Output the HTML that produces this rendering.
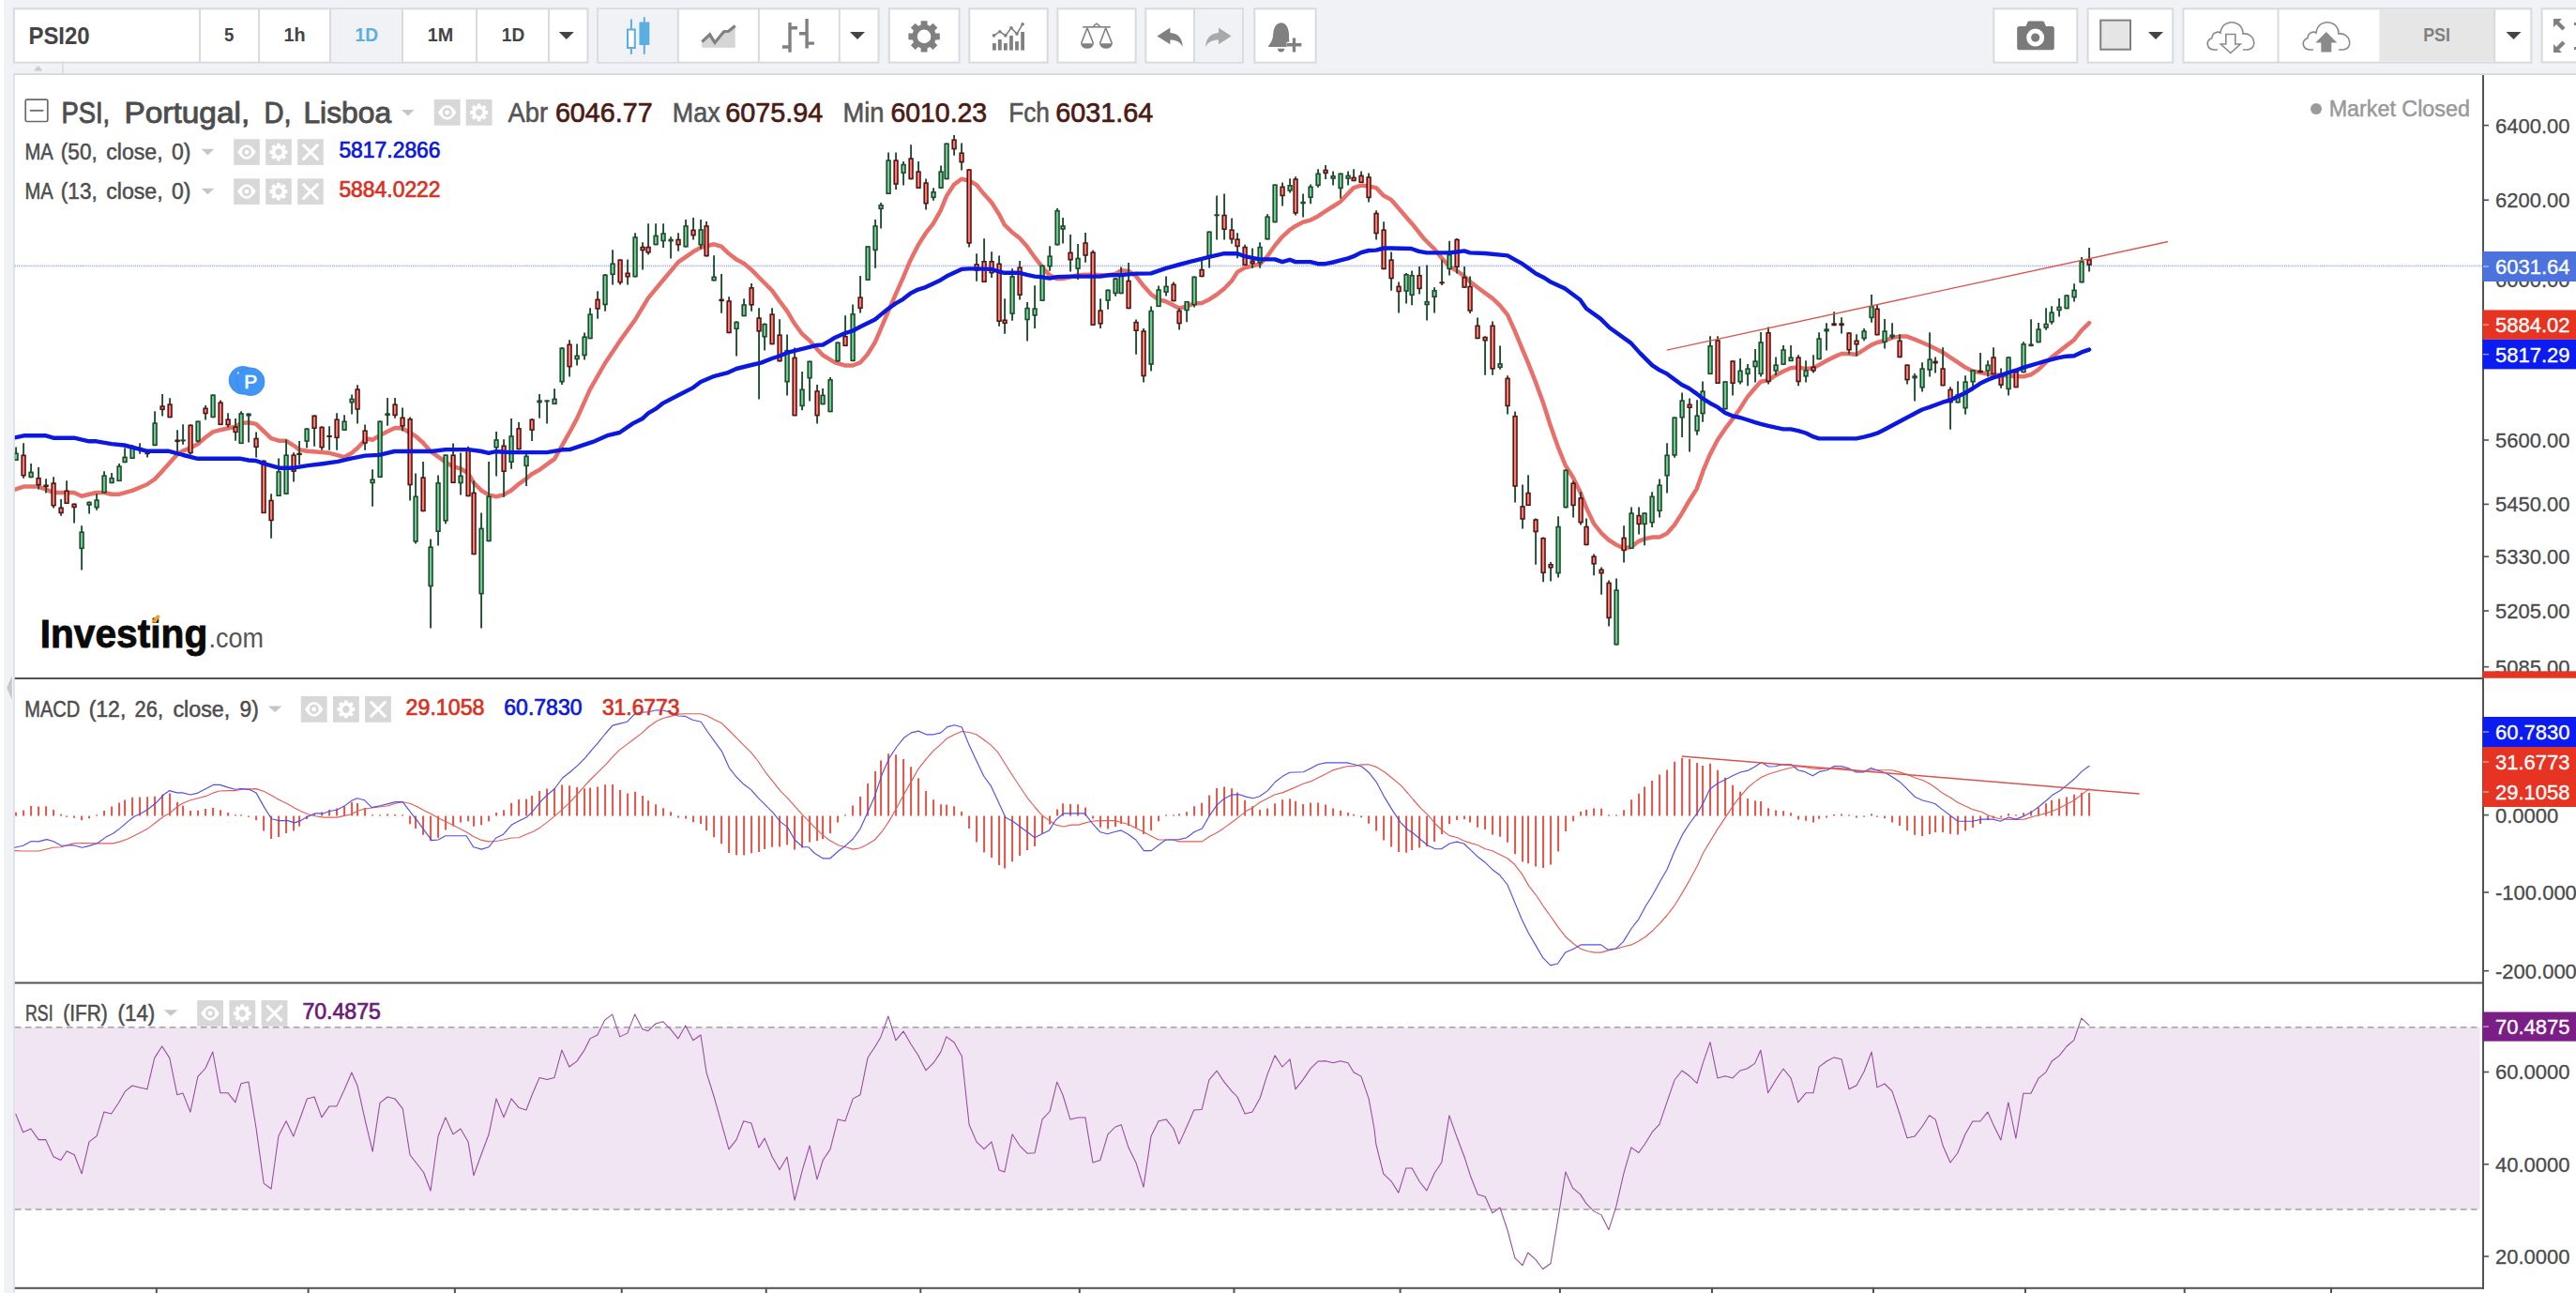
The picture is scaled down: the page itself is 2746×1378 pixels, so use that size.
<!DOCTYPE html>
<html><head><meta charset="utf-8"><title>PSI20 chart</title>
<style>html,body{margin:0;padding:0;background:#fff;}body{width:2746px;height:1378px;overflow:hidden;font-family:"Liberation Sans",sans-serif;}svg text{font-family:"Liberation Sans",sans-serif;}</style>
</head><body>
<svg width="2746" height="1378" viewBox="0 0 2746 1378" font-family="Liberation Sans, sans-serif" style="display:block"><rect x="0" y="0" width="2746" height="1378" fill="#fff"/>
<rect x="4" y="0" width="2742" height="80" fill="#f0f2f5"/>
<rect x="4" y="80" width="10.2" height="1298" fill="#f0f2f5"/>
<rect x="14.2" y="80" width="1.6" height="1298" fill="#d7dbe0"/>
<rect x="14" y="78" width="2732" height="2" fill="#d7dbe0"/>
<rect x="66" y="67" width="1.6" height="12" fill="#d7dbe0"/>
<path d="M36 75.5 L45.5 75.5 L40.8 70 Z" fill="#c9cbcf"/>
<path d="M12.8 720 L12.8 746 L7.2 733 Z" fill="#c6c8cb"/>
<rect x="14.9" y="9.3" width="611.6" height="57.3" fill="#fff" stroke="#d7dbe0" stroke-width="2"/>
<rect x="353" y="10.3" width="75" height="55.3" fill="#f0f2f5"/>
<rect x="212" y="9.3" width="2" height="57.3" fill="#d7dbe0"/>
<rect x="275" y="9.3" width="2" height="57.3" fill="#d7dbe0"/>
<rect x="351" y="9.3" width="2" height="57.3" fill="#d7dbe0"/>
<rect x="428" y="9.3" width="2" height="57.3" fill="#d7dbe0"/>
<rect x="507" y="9.3" width="2" height="57.3" fill="#d7dbe0"/>
<rect x="584" y="9.3" width="2" height="57.3" fill="#d7dbe0"/>
<text x="30.4" y="46.7" font-size="26" fill="#444" font-weight="bold" text-anchor="start" textLength="65.3" lengthAdjust="spacingAndGlyphs" >PSI20</text>
<text x="239.1" y="43.6" font-size="21" fill="#444" font-weight="bold" text-anchor="start" textLength="10.4" lengthAdjust="spacingAndGlyphs" >5</text>
<text x="302.4" y="43.6" font-size="21" fill="#444" font-weight="bold" text-anchor="start" textLength="23.1" lengthAdjust="spacingAndGlyphs" >1h</text>
<text x="378.5" y="43.6" font-size="21" fill="#5aaee0" font-weight="bold" text-anchor="start" textLength="24.5" lengthAdjust="spacingAndGlyphs" >1D</text>
<text x="455.7" y="43.6" font-size="21" fill="#444" font-weight="bold" text-anchor="start" textLength="27.5" lengthAdjust="spacingAndGlyphs" >1M</text>
<text x="534.8" y="43.6" font-size="21" fill="#444" font-weight="bold" text-anchor="start" textLength="24.4" lengthAdjust="spacingAndGlyphs" >1D</text>
<path d="M595.8 34 L611.8 34 L603.8 42 Z" fill="#444"/>
<rect x="637.2" y="9.3" width="299.3" height="57.3" fill="#fff" stroke="#d7dbe0" stroke-width="2"/>
<rect x="638.2" y="10.3" width="83.7" height="55.3" fill="#f0f2f5"/>
<rect x="721.9" y="9.3" width="2" height="57.3" fill="#d7dbe0"/>
<rect x="807.9" y="9.3" width="2" height="57.3" fill="#d7dbe0"/>
<rect x="893.8" y="9.3" width="2" height="57.3" fill="#d7dbe0"/>
<g stroke="#5aaee0" stroke-width="2" fill="none"><line x1="672.9" y1="20.5" x2="672.9" y2="57.8"/><rect x="669" y="31.5" width="7.8" height="19.5" fill="#fff"/><line x1="686.8" y1="18.2" x2="686.8" y2="57.8"/><rect x="682.5" y="24.5" width="8.8" height="22.5" fill="#5aaee0"/></g>
<path d="M748.3 44.6 L756.6 36.8 L762 45.4 L771.6 33.7 L776.7 33.3 L783.7 27.5 L783.7 50.8 L748.3 50.8 Z" fill="#d5d5d5"/>
<path d="M748.3 44.6 L756.6 36.8 L762 45.4 L771.6 33.7 L776.7 33.3 L783.7 27.5" fill="none" stroke="#808080" stroke-width="3.2"/>
<g stroke="#808080" stroke-width="3.4" fill="none"><path d="M842 23.9 V55.8 M833.9 50 H842 M842 29.8 H850"/><path d="M860.1 20 V51.6 M852 35.7 H860.1 M860.1 46.1 H867.9"/></g>
<path d="M906 34 L922 34 L914 42 Z" fill="#444"/>
<rect x="947.8" y="9.3" width="74.8" height="57.3" fill="#fff" stroke="#d7dbe0" stroke-width="2"/>
<path d="M997.4 35.4 L1001.8 35.5 L1001.8 42.3 L997.4 42.4 L996.3 45.1 L999.3 48.3 L994.5 53.1 L991.3 50.1 L988.6 51.2 L988.5 55.6 L981.7 55.6 L981.6 51.2 L978.9 50.1 L975.7 53.1 L970.9 48.3 L973.9 45.1 L972.8 42.4 L968.4 42.3 L968.4 35.5 L972.8 35.4 L973.9 32.7 L970.9 29.5 L975.7 24.7 L978.9 27.7 L981.6 26.6 L981.7 22.2 L988.5 22.2 L988.6 26.6 L991.3 27.7 L994.5 24.7 L999.3 29.5 L996.3 32.7 Z M992.4 38.9 A7.3 7.3 0 1 0 977.8 38.9 A7.3 7.3 0 1 0 992.4 38.9 Z" fill="#808080" fill-rule="evenodd"/>
<rect x="1033.3" y="9.3" width="83.4" height="57.3" fill="#fff" stroke="#d7dbe0" stroke-width="2"/>
<rect x="1058" y="46.1" width="3.8" height="7.5" fill="#808080"/>
<rect x="1063.9" y="42" width="3.8" height="11.6" fill="#808080"/>
<rect x="1070" y="46.1" width="3.8" height="7.5" fill="#808080"/>
<rect x="1076.1" y="37.9" width="3.8" height="15.7" fill="#808080"/>
<rect x="1082.1" y="44.1" width="3.8" height="9.5" fill="#808080"/>
<rect x="1088.2" y="34" width="3.8" height="19.6" fill="#808080"/>
<polyline points="1059.5,37.9 1065.8,33.7 1071.9,37.9 1078,29.8 1084,36.1 1090.1,25.7" fill="none" stroke="#808080" stroke-width="1.6"/>
<circle cx="1059.5" cy="37.9" r="1.8" fill="#808080"/>
<circle cx="1065.8" cy="33.7" r="1.8" fill="#808080"/>
<circle cx="1071.9" cy="37.9" r="1.8" fill="#808080"/>
<circle cx="1078" cy="29.8" r="1.8" fill="#808080"/>
<circle cx="1084" cy="36.1" r="1.8" fill="#808080"/>
<circle cx="1090.1" cy="25.7" r="1.8" fill="#808080"/>
<rect x="1127.4" y="9.3" width="83.2" height="57.3" fill="#fff" stroke="#d7dbe0" stroke-width="2"/>
<g stroke="#808080" stroke-width="1.6" fill="none"><path d="M1154.2 28.8 H1183.8"/><path d="M1165.5 27.8 L1169 25.2 L1172.5 27.8"/><path d="M1159 29.8 L1152.6 46.2 M1159 29.8 L1165.5 46.2"/><path d="M1178.7 29.8 L1172.5 46.2 M1178.7 29.8 L1185.4 46.2"/></g>
<path d="M1152 46.2 H1166 A7 5.6 0 0 1 1152 46.2 Z" fill="#808080"/>
<path d="M1172 46.2 H1186 A7 5.6 0 0 1 1172 46.2 Z" fill="#808080"/>
<rect x="1221.3" y="9.3" width="103.5" height="57.3" fill="#fff" stroke="#d7dbe0" stroke-width="2"/>
<rect x="1274" y="10.3" width="49.8" height="55.3" fill="#f0f2f5"/>
<rect x="1272" y="9.3" width="2" height="57.3" fill="#d7dbe0"/>
<path d="M1233.4 38.4 L1247.4 29.4 L1247.4 35 C1256 35.5 1260.5 41 1260.7 50 C1258 44.5 1254 42.5 1247.4 42.5 L1247.4 47.2 Z" fill="#808080"/>
<path d="M1312.6 38.4 L1299 29.4 L1299 35 C1290.5 35.5 1285.5 41 1285.1 50 C1288 44.5 1292 42.5 1299 42.5 L1299 47.2 Z" fill="#a9a9a9"/>
<rect x="1337.3" y="9.3" width="65.3" height="57.3" fill="#fff" stroke="#d7dbe0" stroke-width="2"/>
<path d="M1365.8 24.2 C1361.5 24.4 1358.6 28 1357.6 33 C1356.8 37.5 1357.2 41 1355.2 44.5 C1354 46.7 1352.3 48 1351.9 50 L1376.2 50 C1375.6 47.5 1374.6 46.5 1374.3 44 C1373.8 40.5 1374.4 37 1373.6 33 C1372.6 28 1370 24.4 1365.8 24.2 Z" fill="#808080"/>
<path d="M1362 51.8 H1369.2 A3.6 3.6 0 0 1 1362 51.8 Z" fill="#808080"/>
<path d="M1371.6 47.7 H1387.6 M1379.5 40.2 V55.6" stroke="#fff" stroke-width="6" fill="none"/>
<path d="M1371.8 47.7 H1387.4 M1379.5 40.4 V55.4" stroke="#808080" stroke-width="3.4" fill="none"/>
<rect x="2125.3" y="9.3" width="89" height="57.3" fill="#fff" stroke="#d7dbe0" stroke-width="2"/>
<path d="M2152.7 28.1 H2159.5 L2161.5 23.6 Q2162 22.6 2163.2 22.6 H2177.3 Q2178.5 22.6 2179 23.6 L2181 28.1 H2187.3 Q2189.8 28.1 2189.8 30.6 V50.7 Q2189.8 53.2 2187.3 53.2 H2152.7 Q2150.2 53.2 2150.2 50.7 V30.6 Q2150.2 28.1 2152.7 28.1 Z" fill="#7a7a7a"/>
<circle cx="2169.7" cy="40.1" r="9.5" fill="#fff"/><circle cx="2169.7" cy="40.1" r="4.6" fill="#7a7a7a"/>
<rect x="2225.6" y="9.3" width="90.6" height="57.3" fill="#fff" stroke="#d7dbe0" stroke-width="2"/>
<rect x="2239.2" y="21.6" width="31.8" height="31.1" fill="#e5e5e5" stroke="#808080" stroke-width="2"/>
<path d="M2290 34 L2306 34 L2298 42 Z" fill="#444"/>
<rect x="2327.4" y="9.3" width="370.9" height="57.3" fill="#fff" stroke="#d7dbe0" stroke-width="2"/>
<rect x="2427.5" y="9.3" width="2" height="57.3" fill="#d7dbe0"/>
<rect x="2536.3" y="10.3" width="123" height="55.1" fill="#e6e6e6"/>
<rect x="2658.2" y="9.3" width="2" height="57.1" fill="#d7dbe0"/>
<path d="M2364 53 H2360.5 C2353 53 2350 44 2358 40.5 C2358 35 2364 33 2367 35 C2368 26 2376 22 2383 24.5 C2389 26.5 2391 31 2391 36 C2404 34.5 2407 52 2396 53 H2391" fill="none" stroke="#8a8a8a" stroke-width="1.6"/>
<path d="M2372.8 36.5 H2382.8 V47 H2388.3 L2377.8 56.5 L2367.3 47 H2372.8 Z" fill="#fff" stroke="#8a8a8a" stroke-width="1.6"/>
<path d="M2466 53 H2462.5 C2455 53 2452 44 2460 40.5 C2460 35 2466 33 2469 35 C2470 26 2478 22 2485 24.5 C2491 26.5 2493 31 2493 36 C2506 34.5 2509 52 2498 53 H2493" fill="none" stroke="#8a8a8a" stroke-width="1.6"/>
<path d="M2479.8 34 L2491.3 45.5 H2485.3 V55.5 H2474.3 V45.5 H2468.3 Z" fill="#8a8a8a"/>
<text x="2583.2" y="44.4" font-size="21" fill="#808080" font-weight="bold" text-anchor="start" textLength="28.8" lengthAdjust="spacingAndGlyphs" >PSI</text>
<path d="M2671.5 34 L2687.5 34 L2679.5 42 Z" fill="#444"/>
<rect x="2709.6" y="9.3" width="60" height="57.1" fill="#fff" stroke="#d7dbe0" stroke-width="2"/>
<g fill="#808080"><path d="M2722 20 H2731 L2728 23 L2734.5 29.5 L2731.5 32.5 L2725 26 L2722 29 Z"/><path d="M2722 56 H2731 L2728 53 L2734.5 46.5 L2731.5 43.5 L2725 50 L2722 47 Z"/><rect x="2744" y="24" width="2" height="3"/><rect x="2744" y="50" width="2" height="3"/></g>
<rect x="15.8" y="1095" width="2627.7" height="193.8" fill="#f1e4f3"/>
<path d="M15.8 1094.8 H2643.5 M15.8 1288.8 H2643.5" stroke="#b0a9b3" stroke-width="1.8" stroke-dasharray="6.7 4.3" fill="none"/>
<path d="M15.8 283.3 H2647" stroke="#9dabea" stroke-width="1.7" stroke-dasharray="1.05 1.05" fill="none"/>
<defs><clipPath id="cm"><rect x="15.8" y="80" width="2631" height="642"/></clipPath></defs>
<g clip-path="url(#cm)">
<polyline points="16,521.6 25.3,518.6 40.6,518.6 49.1,521.6 56.8,525 78.9,525 86.9,528.8 102.7,525 111,525 118.9,526.7 127.4,526.7 141,522.8 156.3,516.5 165,510.6 173,502.1 180.9,493.2 188.9,484.2 195.4,480.3 203.1,477.4 211.1,473.1 218.9,466.3 226.9,460.4 234.9,458.2 250.9,454.8 257,451 265.1,450.3 273,451.9 281.1,459.5 289,467.2 297.1,469.7 304.9,469.7 313.1,474.8 318.9,479.1 327.1,480.8 343,482.1 350.9,482.8 358.8,484.9 366.9,487.2 375,482.8 381.1,477.5 388.9,469.3 393.1,467.7 397.1,468.7 405,464 412.8,460.1 421,456.1 429.1,456.6 437,461.2 443,464.7 450.9,471.7 459,481 467.2,486.8 475,492.6 482.9,497.2 491.1,499.5 498.9,504.2 505,514.6 513.1,522.7 521,527.4 528.9,529.2 536.8,527.4 544.9,522.7 553,515.8 561.1,510 566.9,505.3 575.1,500.7 583,494.9 591.1,489.1 599,475.1 606.9,461.2 615,446.1 628.9,415.1 645,387 661.1,362.9 677.1,340.7 691,317.6 706.9,298.5 723,279.4 738.9,268.3 746.9,263.9 753,262.3 761,260.3 768.9,262.7 776.9,270.3 784.9,276.4 793,280.8 801,287.4 808.9,295.5 814.9,301.5 823,309.6 830.8,320.6 839.1,331.7 846.9,344.8 854.9,355.8 863,362.9 870.8,371.9 877.1,378.5 885.1,383.4 890.2,386.4 900.9,389.5 909.1,389.5 917,386.4 924.9,377.5 932.8,364.8 938.9,350.7 946.9,331.6 954.8,313.7 962.7,295.9 970.8,276.7 978.7,261.4 986.7,248.7 994.8,238.4 1002.7,224.4 1008.9,209.1 1016.8,196.9 1024.9,190.7 1032.8,192.5 1040.8,196.9 1048.7,206.6 1056.8,215.5 1065,228.2 1070.9,239.7 1078.8,247.4 1086.9,253.8 1094.9,262.7 1103,274.2 1110.9,284.4 1118.8,293.3 1126.7,297.1 1132.9,297.1 1140.8,295.3 1148.9,293.3 1156.9,292.8 1165,292.8 1172.9,293.3 1181.1,293.3 1189,292 1195,288.3 1203,288.9 1210.9,294.1 1218.9,304.6 1227,313.6 1234.9,319.2 1242.9,321.3 1251,325.5 1257.1,328.6 1265,326.5 1273,323.4 1281.1,323 1289,319.2 1297,314 1304.9,307.7 1313.1,299.3 1319.1,289.9 1327,285.4 1335,283.3 1342.9,281.6 1350.9,273.2 1359,261.7 1366.9,252.3 1374.9,245 1380.9,240.9 1388.9,236.7 1397,234.6 1405,230.4 1412.9,225.2 1421,220 1429,214.8 1436.9,206.4 1443,200.1 1450.9,197.6 1459.1,198.5 1467,200.1 1474.9,208.5 1482.9,212.7 1506.5,240 1518.2,254.7 1528.8,265 1537.1,275.3 1545,284.1 1552.9,288.5 1560.9,294.4 1567.1,300.3 1575,306.2 1582.9,312.1 1590.9,317.9 1598.8,325.3 1607.1,335.6 1615,353.2 1622.9,372.4 1629.1,387.1 1637.1,407.6 1645.1,429.5 1653,454.3 1660.9,476.5 1668.9,496.3 1676.8,508.7 1684.7,524.8 1690.9,540.9 1699.1,558.2 1707,568.1 1714.9,575.5 1722.8,580.5 1730.7,584.2 1738.9,583 1746.8,576.8 1753,574.3 1761.2,572.6 1769.1,572.6 1777,568.6 1785,559.5 1792.9,547.1 1800.8,533.5 1808.7,521.1 1814.9,503.8 1816.2,499.9 1823,484.1 1831,468.8 1839,456.9 1846.9,446.7 1854.8,435.6 1862.9,422.9 1870.9,413.5 1876.9,406.7 1884.9,405.4 1892.9,399.9 1901,395.7 1908.9,392.3 1917,391.4 1925,393.1 1933,392.3 1939,388.9 1947,384.6 1955,380.4 1963,377 1970.9,377 1978.9,377.8 1987.1,372.7 1994.9,367.6 2001.1,365 2009,363.3 2016.9,359.9 2024.9,358.6 2032.9,358.6 2040.9,361.6 2049,365 2057,368.5 2062.9,371.5 2070.9,375.4 2079,380.8 2087,386.2 2095,391.6 2102.9,395.5 2111,397 2119,398.5 2125,399.3 2132.9,400.1 2141,400.6 2149,401.2 2157.1,401.2 2164.9,399.3 2173,393.9 2180.9,386.2 2186.9,380.8 2194.9,374.6 2203,368.4 2211,362.2 2218.9,352.2 2227.1,344.1" fill="none" stroke="#e8706a" stroke-width="4.5" stroke-linejoin="round" stroke-linecap="round" />
<path d="M17.1 476.5V491M25.1 472.3V509.7M33.1 494.1V509.2M41.1 498.1V521.6M49.1 510.2V525.5M57.1 508.2V541.5M65.1 532V549.7M71.1 512.3V536.9M79.1 536.6V557.5M87.1 560.2V607.5M95.1 534.4V547.6M103.1 526.2V543.7M111.1 502.2V525.5M119.1 504.1V515.2M127.1 494.1V513.1M133.1 477.4V493.2M141.1 474.3V489M149.1 472.3V483.7M157.1 479.9V487.6M165.1 438.3V475.2M173.1 420.1V443.5M181.1 424.2V445.2M189.1 458.2V481.6M195.1 452.2V473.7M203.1 452.2V484.5M211.1 448.5V471.4M219.1 432V447.6M227.1 420.4V445.2M235.1 426.4V453.1M243.1 440.3V455.5M251.1 446.1V469.7M257.1 438.3V473.1M265.1 440.5V471.4M273.1 460.4V487.6M281.1 490.2V547.1M289.1 526.2V573.8M297.1 488.5V528.9M305.1 468.4V526.9M313.1 482.3V513.6M319.1 470.1V495.3M327.1 456.1V477.4M335.1 442.5V475.7M343.1 454.3V479.8M351.1 454.3V479.8M359.1 440.3V479.8M367.1 442.2V458.9M375.1 420.6V441.5M381.1 410.2V451.5M389.1 452.4V479.8M397.1 500.2V539.7M405.1 448.5V509M413.1 424.1V453.8M421.1 424.1V445.7M429.1 434.5V459.6M437.1 444.5V533.6M443.1 504.6V579.6M451.1 492.1V545.2M459.1 574.5V669.6M467.1 506.5V581.4M475.1 484.4V558.2M483.1 472.4V515.1M491.1 482.6V527.6M499.1 475.8V529.2M505.1 512.3V591.2M513.1 546.4V669.6M521.1 492.1V577.3M529.1 460.1V507.6M537.1 468.2V529.7M545.1 446.1V499.7M553.1 450.1V479.3M561.1 480.3V518.1M567.1 446.1V470M575.1 420.1V445.7M583.1 426.4V451.5M591.1 414.3V431.1M599.1 369.9V410.1M607.1 362.3V401.5M615.1 366.5V389.6M623.1 354.4V383.4M629.1 328.3V361.2M637.1 310.2V339.7M645.1 292.1V331.7M653.1 266.3V303.5M661.1 276.4V303.5M669.1 276.4V303.5M677.1 248.2V295.5M685.1 258.3V287.4M691.1 238.2V271.5M699.1 238.2V261.3M707.1 238.2V263.9M715.1 252.2V275.6M723.1 248.2V267.7M731.1 234.1V263.5M739.1 232.1V255.5M747.1 234.1V265.5M753.1 236.1V273.4M761.1 272.3V299.5M769.1 292.1V333.7M777.1 316.2V355.2M785.1 342.3V379.5M793.1 318.2V337.3M801.1 302.1V331.7M809.1 328.3V425.6M815.1 344.4V373.5M823.1 328.3V367.3M831.1 340.3V385.4M839.1 356.4V421.6M847.1 370.5V443.3M855.1 396V437.3M863.1 384.6V427.6M871.1 410.1V451.4M877.1 414.1V431.2M885.1 402.1V439.3M893.1 364.5V385.4M901.1 336.2V369.1M909.1 324.4V385.2M917.1 294.1V333.6M925.1 262.2V298.9M933.1 234.1V285.7M939.1 216V243.5M947.1 162.4V207.1M955.1 162.4V202M963.1 172.1V197.6M971.1 154.2V191.2M979.1 172.1V200.9M987.1 190.5V223.6M995.1 200.2V213.7M1003.1 176.4V200.9M1009.1 152.5V191.2M1017.1 144V165.7M1025.1 152.5V181.5M1033.1 180.3V263.5M1041.1 270.3V299.7M1049.1 254.3V301M1057.1 268.3V295.9M1065.1 272.4V347.7M1071.1 318.3V355.8M1079.1 286.2V341.8M1087.1 278V319.6M1095.1 322.1V363.5M1103.1 304.3V350M1111.1 282.6V320.9M1119.1 262.2V288.7M1127.1 221.9V261.4M1133.1 232.1V259.6M1141.1 249.9V289.5M1149.1 260.1V297.9M1157.1 248.1V279.8M1165.1 266.5V346.9M1173.1 318.3V350M1181.1 308.6V329.8M1189.1 295.9V315.8M1195.1 284.4V313.2M1203.1 279.9V329.2M1211.1 340.5V377.7M1219.1 350.1V407.5M1227.1 326.5V395.4M1235.1 304.6V327.1M1243.1 294.5V315.6M1251.1 300.4V321.3M1257.1 328.6V351.6M1265.1 320.9V343.2M1273.1 294.5V327.5M1281.1 274.9V295.2M1289.1 246.5V285.4M1297.1 208.5V255.5M1305.1 206.4V255.5M1313.1 232.5V259.7M1319.1 248.2V275.3M1327.1 260.7V283.1M1335.1 264.5V285.8M1343.1 258.2V285.8M1351.1 228.3V255.5M1359.1 196.4V237.3M1367.1 194.5V219.6M1375.1 190.3V205.4M1381.1 188.2V229.4M1389.1 206.4V231.5M1397.1 196.4V217.3M1405.1 180.3V199.7M1413.1 176.1V191.1M1421.1 182.4V197.4M1429.1 184.5V211.6M1437.1 182.4V197.4M1443.1 180.3V193.2M1451.1 182.4V194.9M1459.1 184.5V215.4M1467.1 224.2V255.5M1475.1 236.3V287.2M1483.1 268.6V309.8M1491.1 300.4V333.4M1499.1 291V323.4M1505.1 288.5V325.3M1513.1 284.1V313.5M1521.1 282.6V341.5M1529.1 306.2V333.5M1537.1 276.8V304.1M1545.1 256.8V293.5M1553.1 254.1V291.5M1561.1 284.1V306.8M1567.1 294.4V334.1M1575.1 338.5V361.2M1583.1 358.2V399.7M1591.1 342.4V399.7M1599.1 368.5V393.8M1607.1 400.3V441.5M1615.1 438.5V535.6M1623.1 516.5V563.5M1629.1 506.2V539.1M1637.1 552.4V601.8M1645.1 572.4V620.3M1653.1 599.1V619.6M1661.1 550.3V615.6M1669.1 500.5V541.4M1677.1 512.4V551.5M1685.1 524.3V559.5M1691.1 552.5V581.2M1699.1 590.4V613.2M1707.1 604.5V633.7M1715.1 618.4V667.6M1723.1 616.4V687.4M1731.1 560.2V599.6M1739.1 540.4V585M1747.1 540.4V569.4M1753.1 546.3V581.2M1761.1 524.3V561.9M1769.1 510.4V551.5M1777.1 472.3V525.5M1785.1 444.4V487.7M1793.1 418.4V465.9M1801.1 424.6V481.5M1809.1 426.3V463.7M1815.1 406.5V449.8M1823.1 358.2V399.1M1831.1 358.2V408.9M1839.1 406.2V436.5M1847.1 384.3V421.5M1855.1 382.1V409.6M1863.1 388V411.3M1871.1 371.9V407.6M1877.1 354V401.6M1885.1 348.4V409.6M1893.1 380.4V399.9M1901.1 368.1V388.9M1909.1 368.1V385.1M1917.1 378.3V411.3M1925.1 384.3V407.6M1933.1 378.3V397.4M1939.1 354.3V383.2M1947.1 344.3V373.6M1955.1 332.2V347.2M1963.1 338.2V355.4M1971.1 354.3V377.5M1979.1 356.2V379.5M1987.1 350.1V363.3M1995.1 314V343.8M2001.1 324.2V357.4M2009.1 340V371.5M2017.1 344.3V361.6M2025.1 356.2V381.2M2033.1 388.4V409.6M2041.1 397.9V427.6M2049.1 386.3V417.4M2057.1 354.3V401.6M2063.1 380.4V397.4M2071.1 370.2V411.3M2079.1 412.2V457.8M2087.1 406.3V429.5M2095.1 400.2V441.7M2103.1 393.9V412.5M2111.1 376.1V397.3M2119.1 384.3V401.6M2125.1 370.3V399.3M2133.1 392.4V413.7M2141.1 380.3V421.4M2149.1 395.8V413.2M2157.1 364.2V397.3M2165.1 340.3V369.2M2173.1 344.1V365.3M2181.1 328.2V351.8M2187.1 326.2V345.7M2195.1 318.1V337.5M2203.1 314.3V329.3M2211.1 302.2V321.5M2219.1 274.1V301.4M2227.1 264V289.5" stroke="#1f4c2f" stroke-width="1.9" fill="none"/>
<g fill="#6fcb8e" stroke="#1c4a2c" stroke-width="1.6"><rect x="15.2" y="483.3" width="3.8" height="6.9"/><rect x="31.2" y="503.4" width="3.8" height="5"/><rect x="85.2" y="567.2" width="3.8" height="17.1"/><rect x="93.2" y="535.5" width="3.8" height="2.5"/><rect x="101.2" y="533.1" width="3.8" height="7.6"/><rect x="109.2" y="507.1" width="3.8" height="17.6"/><rect x="117.2" y="509.7" width="3.8" height="4.7"/><rect x="125.2" y="497.1" width="3.8" height="15.2"/><rect x="131.2" y="487.4" width="3.8" height="5"/><rect x="139.2" y="478.2" width="3.8" height="10"/><rect x="163.2" y="451.1" width="3.8" height="23.2"/><rect x="193.2" y="469.2" width="3.8" height="0.4"/><rect x="209.2" y="449.3" width="3.8" height="20.7"/><rect x="225.2" y="421.2" width="3.8" height="23.2"/><rect x="255.2" y="440.9" width="3.8" height="31.4"/><rect x="263.2" y="441.3" width="3.8" height="1.5"/><rect x="295.2" y="502.9" width="3.8" height="25.3"/><rect x="303.2" y="485.2" width="3.8" height="40.9"/><rect x="325.2" y="457.3" width="3.8" height="12.7"/><rect x="365.2" y="449.3" width="3.8" height="8.8"/><rect x="373.2" y="425.4" width="3.8" height="3.3"/><rect x="395.2" y="511.2" width="3.8" height="3.3"/><rect x="403.2" y="449.3" width="3.8" height="59"/><rect x="411.2" y="441.1" width="3.8" height="1.2"/><rect x="441.2" y="529.3" width="3.8" height="47.6"/><rect x="457.2" y="583.2" width="3.8" height="41.3"/><rect x="465.2" y="514.9" width="3.8" height="51.3"/><rect x="473.2" y="485.2" width="3.8" height="69.6"/><rect x="489.2" y="507.3" width="3.8" height="7.2"/><rect x="511.2" y="563.4" width="3.8" height="69.2"/><rect x="519.2" y="529.3" width="3.8" height="47.1"/><rect x="527.2" y="469" width="3.8" height="7.7"/><rect x="543.2" y="465" width="3.8" height="27.2"/><rect x="559.2" y="486.4" width="3.8" height="10"/><rect x="573.2" y="427.2" width="3.8" height="1.4"/><rect x="581.2" y="427.2" width="3.8" height="0.4"/><rect x="589.2" y="425.4" width="3.8" height="4.9"/><rect x="597.2" y="371.3" width="3.8" height="35.4"/><rect x="613.2" y="379.3" width="3.8" height="3.2"/><rect x="621.2" y="359.2" width="3.8" height="19.3"/><rect x="627.2" y="335.1" width="3.8" height="25.4"/><rect x="643.2" y="293.3" width="3.8" height="31.2"/><rect x="651.2" y="281.2" width="3.8" height="11.1"/><rect x="675.2" y="253" width="3.8" height="41.6"/><rect x="697.2" y="251.4" width="3.8" height="9.1"/><rect x="705.2" y="249" width="3.8" height="7.5"/><rect x="713.2" y="255.5" width="3.8" height="1.2"/><rect x="729.2" y="241" width="3.8" height="21.7"/><rect x="745.2" y="245" width="3.8" height="15.7"/><rect x="759.2" y="295.3" width="3.8" height="3.4"/><rect x="783.2" y="343.5" width="3.8" height="6.8"/><rect x="791.2" y="325" width="3.8" height="11.5"/><rect x="813.2" y="345.6" width="3.8" height="13.1"/><rect x="837.2" y="373.7" width="3.8" height="33"/><rect x="853.2" y="415.3" width="3.8" height="17.1"/><rect x="861.2" y="385.4" width="3.8" height="17.3"/><rect x="875.2" y="421.4" width="3.8" height="9.1"/><rect x="883.2" y="404.9" width="3.8" height="33.6"/><rect x="891.2" y="365.3" width="3.8" height="19.3"/><rect x="907.2" y="334.9" width="3.8" height="49.4"/><rect x="923.2" y="263" width="3.8" height="35.1"/><rect x="931.2" y="241" width="3.8" height="25.4"/><rect x="937.2" y="218.8" width="3.8" height="3.5"/><rect x="945.2" y="171.1" width="3.8" height="35.1"/><rect x="961.2" y="175.5" width="3.8" height="8.6"/><rect x="993.2" y="204.8" width="3.8" height="5.5"/><rect x="1001.2" y="183.1" width="3.8" height="17"/><rect x="1007.2" y="153.3" width="3.8" height="37.2"/><rect x="1077.2" y="294.9" width="3.8" height="39.2"/><rect x="1093.2" y="328.6" width="3.8" height="11.9"/><rect x="1101.2" y="329.1" width="3.8" height="6.8"/><rect x="1109.2" y="283.4" width="3.8" height="36.7"/><rect x="1117.2" y="273.2" width="3.8" height="10.4"/><rect x="1125.2" y="224.7" width="3.8" height="35.9"/><rect x="1131.2" y="241" width="3.8" height="3"/><rect x="1147.2" y="275.5" width="3.8" height="10.6"/><rect x="1179.2" y="309.4" width="3.8" height="10.6"/><rect x="1187.2" y="297.2" width="3.8" height="15.2"/><rect x="1193.2" y="294.1" width="3.8" height="18.3"/><rect x="1225.2" y="331.5" width="3.8" height="56.5"/><rect x="1233.2" y="309.1" width="3.8" height="17.2"/><rect x="1241.2" y="305.4" width="3.8" height="5.7"/><rect x="1263.2" y="321.7" width="3.8" height="8.8"/><rect x="1271.2" y="295.3" width="3.8" height="29.3"/><rect x="1287.2" y="247.3" width="3.8" height="25.1"/><rect x="1295.2" y="229.1" width="3.8" height="0.4"/><rect x="1341.2" y="263.6" width="3.8" height="16.2"/><rect x="1349.2" y="231.2" width="3.8" height="23.5"/><rect x="1357.2" y="197.2" width="3.8" height="39.3"/><rect x="1373.2" y="197.8" width="3.8" height="5.1"/><rect x="1387.2" y="215.6" width="3.8" height="0.9"/><rect x="1395.2" y="199.3" width="3.8" height="10.9"/><rect x="1403.2" y="185.3" width="3.8" height="12"/><rect x="1419.2" y="187.8" width="3.8" height="2.2"/><rect x="1427.2" y="185.3" width="3.8" height="15.1"/><rect x="1435.2" y="187.4" width="3.8" height="2.6"/><rect x="1497.2" y="292.8" width="3.8" height="17.2"/><rect x="1503.2" y="293.7" width="3.8" height="20.5"/><rect x="1519.2" y="321.7" width="3.8" height="2.8"/><rect x="1527.2" y="309.9" width="3.8" height="6.3"/><rect x="1543.2" y="271.7" width="3.8" height="14.6"/><rect x="1597.2" y="387.9" width="3.8" height="3.4"/><rect x="1659.2" y="561.5" width="3.8" height="49.1"/><rect x="1667.2" y="501.3" width="3.8" height="39.2"/><rect x="1721.2" y="629.1" width="3.8" height="57.6"/><rect x="1737.2" y="547.1" width="3.8" height="37"/><rect x="1751.2" y="547.1" width="3.8" height="11.3"/><rect x="1759.2" y="529.3" width="3.8" height="27.4"/><rect x="1767.2" y="517.2" width="3.8" height="27.1"/><rect x="1775.2" y="485.3" width="3.8" height="21.4"/><rect x="1783.2" y="445.2" width="3.8" height="39.7"/><rect x="1791.2" y="427.1" width="3.8" height="17.7"/><rect x="1807.2" y="443.2" width="3.8" height="15.7"/><rect x="1813.2" y="417.2" width="3.8" height="23.4"/><rect x="1821.2" y="368.9" width="3.8" height="29.4"/><rect x="1837.2" y="407" width="3.8" height="28.7"/><rect x="1853.2" y="395.3" width="3.8" height="11.5"/><rect x="1861.2" y="393.1" width="3.8" height="5.2"/><rect x="1869.2" y="385.1" width="3.8" height="5.5"/><rect x="1875.2" y="365" width="3.8" height="33.3"/><rect x="1891.2" y="389.2" width="3.8" height="5.7"/><rect x="1899.2" y="373" width="3.8" height="15.1"/><rect x="1907.2" y="381.2" width="3.8" height="3.2"/><rect x="1923.2" y="395.1" width="3.8" height="5.7"/><rect x="1937.2" y="361.1" width="3.8" height="21.4"/><rect x="1945.2" y="351.1" width="3.8" height="1.6"/><rect x="1985.2" y="353.1" width="3.8" height="7.4"/><rect x="1993.2" y="326.7" width="3.8" height="11.7"/><rect x="2007.2" y="353.1" width="3.8" height="11.2"/><rect x="2015.2" y="357.3" width="3.8" height="1.5"/><rect x="2039.2" y="401.1" width="3.8" height="1.5"/><rect x="2047.2" y="393.1" width="3.8" height="19.7"/><rect x="2055.2" y="383.2" width="3.8" height="10.8"/><rect x="2085.2" y="421" width="3.8" height="7.7"/><rect x="2093.2" y="407.1" width="3.8" height="27.6"/><rect x="2101.2" y="395" width="3.8" height="11.7"/><rect x="2117.2" y="389.3" width="3.8" height="5.7"/><rect x="2139.2" y="381.1" width="3.8" height="33.3"/><rect x="2155.2" y="366.9" width="3.8" height="29.6"/><rect x="2163.2" y="367.3" width="3.8" height="1"/><rect x="2171.2" y="351.1" width="3.8" height="13.4"/><rect x="2179.2" y="345.5" width="3.8" height="3.5"/><rect x="2185.2" y="333.2" width="3.8" height="9.7"/><rect x="2193.2" y="327.4" width="3.8" height="3"/><rect x="2201.2" y="315.1" width="3.8" height="13.4"/><rect x="2209.2" y="309.4" width="3.8" height="7.2"/><rect x="2217.2" y="279" width="3.8" height="21.6"/></g>
<g fill="#f67f72" stroke="#581414" stroke-width="1.6"><rect x="23.2" y="485.3" width="3.8" height="21.4"/><rect x="39.2" y="509.7" width="3.8" height="6.9"/><rect x="47.2" y="517.3" width="3.8" height="1"/><rect x="55.2" y="515.1" width="3.8" height="23.6"/><rect x="63.2" y="541.3" width="3.8" height="5.2"/><rect x="69.2" y="523.3" width="3.8" height="12.9"/><rect x="77.2" y="537.4" width="3.8" height="3"/><rect x="147.2" y="477.7" width="3.8" height="0.6"/><rect x="155.2" y="483" width="3.8" height="0.4"/><rect x="171.2" y="433.1" width="3.8" height="3.2"/><rect x="179.2" y="431.1" width="3.8" height="13.4"/><rect x="187.2" y="469.3" width="3.8" height="1"/><rect x="201.2" y="453.4" width="3.8" height="29.2"/><rect x="217.2" y="435.3" width="3.8" height="5.2"/><rect x="233.2" y="429.2" width="3.8" height="23.1"/><rect x="241.2" y="447.2" width="3.8" height="5.4"/><rect x="249.2" y="455.2" width="3.8" height="5.2"/><rect x="271.2" y="467.5" width="3.8" height="8.8"/><rect x="279.2" y="491.5" width="3.8" height="54.9"/><rect x="287.2" y="533.5" width="3.8" height="20.9"/><rect x="311.2" y="485.2" width="3.8" height="16.9"/><rect x="317.2" y="483.5" width="3.8" height="0.8"/><rect x="333.2" y="443.3" width="3.8" height="12.9"/><rect x="341.2" y="455.5" width="3.8" height="21.1"/><rect x="349.2" y="464.8" width="3.8" height="0.4"/><rect x="357.2" y="447.2" width="3.8" height="19.1"/><rect x="379.2" y="415.1" width="3.8" height="20.9"/><rect x="387.2" y="459.2" width="3.8" height="12.8"/><rect x="419.2" y="431.2" width="3.8" height="11.2"/><rect x="427.2" y="445.3" width="3.8" height="8.6"/><rect x="435.2" y="446.9" width="3.8" height="69.6"/><rect x="449.2" y="509.1" width="3.8" height="35.3"/><rect x="481.2" y="485.2" width="3.8" height="29"/><rect x="497.2" y="479.9" width="3.8" height="48.5"/><rect x="503.2" y="525.4" width="3.8" height="65"/><rect x="535.2" y="475.3" width="3.8" height="26.9"/><rect x="551.2" y="456.9" width="3.8" height="21.6"/><rect x="565.2" y="447.4" width="3.8" height="10.7"/><rect x="605.2" y="367.3" width="3.8" height="23.3"/><rect x="635.2" y="319.4" width="3.8" height="9.5"/><rect x="659.2" y="277.2" width="3.8" height="23.5"/><rect x="667.2" y="291.3" width="3.8" height="3.4"/><rect x="683.2" y="263.5" width="3.8" height="3"/><rect x="689.2" y="263.5" width="3.8" height="5.4"/><rect x="721.2" y="255.5" width="3.8" height="5.2"/><rect x="737.2" y="245.4" width="3.8" height="5.2"/><rect x="751.2" y="241" width="3.8" height="31.6"/><rect x="767.2" y="319.4" width="3.8" height="1"/><rect x="775.2" y="321" width="3.8" height="33.4"/><rect x="799.2" y="306.9" width="3.8" height="17.9"/><rect x="807.2" y="339.1" width="3.8" height="13.7"/><rect x="821.2" y="335.1" width="3.8" height="31.4"/><rect x="829.2" y="357.2" width="3.8" height="27.4"/><rect x="845.2" y="381.4" width="3.8" height="61.2"/><rect x="869.2" y="417" width="3.8" height="25.6"/><rect x="899.2" y="358.7" width="3.8" height="9.6"/><rect x="915.2" y="317.1" width="3.8" height="11.2"/><rect x="953.2" y="171.1" width="3.8" height="24.9"/><rect x="969.2" y="169.1" width="3.8" height="21.4"/><rect x="977.2" y="183.1" width="3.8" height="17"/><rect x="985.2" y="195.1" width="3.8" height="21.6"/><rect x="1015.2" y="149.2" width="3.8" height="9.4"/><rect x="1023.2" y="163.2" width="3.8" height="9.4"/><rect x="1031.2" y="181.1" width="3.8" height="77.8"/><rect x="1039.2" y="281.9" width="3.8" height="6.1"/><rect x="1047.2" y="278.8" width="3.8" height="21.4"/><rect x="1055.2" y="278.8" width="3.8" height="11.9"/><rect x="1063.2" y="281.3" width="3.8" height="60.9"/><rect x="1069.2" y="341.3" width="3.8" height="3"/><rect x="1085.2" y="285.2" width="3.8" height="29"/><rect x="1139.2" y="269.4" width="3.8" height="7.3"/><rect x="1155.2" y="259.1" width="3.8" height="12.9"/><rect x="1163.2" y="269.1" width="3.8" height="77"/><rect x="1171.2" y="331.1" width="3.8" height="13.7"/><rect x="1201.2" y="299.5" width="3.8" height="28.9"/><rect x="1209.2" y="343.6" width="3.8" height="8.6"/><rect x="1217.2" y="353" width="3.8" height="47.5"/><rect x="1249.2" y="303.3" width="3.8" height="17.2"/><rect x="1255.2" y="331.5" width="3.8" height="13"/><rect x="1279.2" y="287.6" width="3.8" height="6.8"/><rect x="1303.2" y="229.5" width="3.8" height="14.7"/><rect x="1311.2" y="245.2" width="3.8" height="9.5"/><rect x="1317.2" y="255.2" width="3.8" height="7.2"/><rect x="1325.2" y="263.6" width="3.8" height="18.7"/><rect x="1333.2" y="278.2" width="3.8" height="2.2"/><rect x="1365.2" y="199.3" width="3.8" height="9.1"/><rect x="1379.2" y="191.1" width="3.8" height="35.8"/><rect x="1411.2" y="181.5" width="3.8" height="2.8"/><rect x="1441.2" y="189.4" width="3.8" height="3"/><rect x="1449.2" y="187.4" width="3.8" height="6.8"/><rect x="1457.2" y="189" width="3.8" height="21.4"/><rect x="1465.2" y="227.5" width="3.8" height="21"/><rect x="1473.2" y="245.2" width="3.8" height="41.2"/><rect x="1481.2" y="277.2" width="3.8" height="19.3"/><rect x="1489.2" y="305.4" width="3.8" height="5.1"/><rect x="1511.2" y="293.7" width="3.8" height="13.7"/><rect x="1535.2" y="301.1" width="3.8" height="0.4"/><rect x="1551.2" y="255.5" width="3.8" height="28.7"/><rect x="1559.2" y="295.8" width="3.8" height="10.2"/><rect x="1565.2" y="305.5" width="3.8" height="25.5"/><rect x="1573.2" y="347.3" width="3.8" height="13.1"/><rect x="1581.2" y="359.6" width="3.8" height="3.1"/><rect x="1589.2" y="347.3" width="3.8" height="45.5"/><rect x="1605.2" y="403.4" width="3.8" height="29"/><rect x="1613.2" y="443.7" width="3.8" height="74.3"/><rect x="1621.2" y="539.9" width="3.8" height="13.1"/><rect x="1627.2" y="525.5" width="3.8" height="12.8"/><rect x="1635.2" y="554" width="3.8" height="12.5"/><rect x="1643.2" y="573.7" width="3.8" height="36.6"/><rect x="1651.2" y="601.8" width="3.8" height="2.9"/><rect x="1675.2" y="515.2" width="3.8" height="23.2"/><rect x="1683.2" y="531" width="3.8" height="25.6"/><rect x="1689.2" y="561.5" width="3.8" height="18.9"/><rect x="1697.2" y="593.2" width="3.8" height="7.6"/><rect x="1705.2" y="607.3" width="3.8" height="3.4"/><rect x="1713.2" y="621.4" width="3.8" height="37"/><rect x="1729.2" y="573.4" width="3.8" height="13"/><rect x="1745.2" y="549.6" width="3.8" height="8.8"/><rect x="1799.2" y="431.3" width="3.8" height="2.9"/><rect x="1829.2" y="363" width="3.8" height="45.2"/><rect x="1845.2" y="385.1" width="3.8" height="23.1"/><rect x="1883.2" y="354.8" width="3.8" height="51.6"/><rect x="1915.2" y="381.2" width="3.8" height="25.3"/><rect x="1931.2" y="391.4" width="3.8" height="3.5"/><rect x="1953.2" y="345.1" width="3.8" height="1.3"/><rect x="1961.2" y="345.1" width="3.8" height="1.3"/><rect x="1969.2" y="355.1" width="3.8" height="17.6"/><rect x="1977.2" y="363.3" width="3.8" height="3.5"/><rect x="1999.2" y="329.3" width="3.8" height="27.3"/><rect x="2023.2" y="363.3" width="3.8" height="17.1"/><rect x="2031.2" y="389.2" width="3.8" height="15.4"/><rect x="2061.2" y="385.4" width="3.8" height="1.3"/><rect x="2069.2" y="393.1" width="3.8" height="17.5"/><rect x="2077.2" y="415.4" width="3.8" height="13.2"/><rect x="2109.2" y="395.5" width="3.8" height="1"/><rect x="2123.2" y="381.1" width="3.8" height="17.4"/><rect x="2131.2" y="398.6" width="3.8" height="11.5"/><rect x="2147.2" y="396.6" width="3.8" height="15.9"/><rect x="2225.2" y="276.9" width="3.8" height="5.2"/></g>
<path d="M1777 373.1 L2311 257.5" stroke="#d9544d" stroke-width="1.4" fill="none"/>
<polyline points="16,466.3 25.3,464.3 49.1,464.3 56.8,466.7 78.9,466.7 95,470.3 102.7,470.3 118.9,473.1 132.5,474.5 157.1,480.8 180.1,480.8 195.4,485 210.7,488.8 256.6,488.8 265.1,490.5 272.8,491 282.2,494.4 297.5,498.7 312.8,498.7 328.1,496.1 343.9,494.2 360.2,491.9 374.1,488.6 389.2,485.6 404.3,484.9 420.5,481 436.8,481 460,481 475,479.1 499.4,479.1 513.3,481 521,482.8 528.9,481.2 544.9,482.1 562.1,482.1 583,482.1 599.2,479.3 607.3,479.1 634.3,470.1 648.4,463.8 660.5,461 674.5,451.4 684.6,446.3 691,440.3 699.1,435.7 706.9,429.6 723,421.2 738.9,413.1 746.9,407.1 761,401.1 775.1,397.4 784.9,393 801,389 811.3,386.6 823,382 830.8,379.5 839.1,375.9 846.9,373.9 863,369.9 870.8,367.9 877.1,367.5 885.1,362.9 890.2,359.7 900.9,355.1 909.1,352.5 917,348.2 932.8,340.5 938.9,335.4 946.9,329 954.8,323.4 962.7,318.8 970.8,312.4 978.7,308.6 986.7,306.1 994.8,302.2 1002.7,298.4 1008.9,294.6 1016.8,290.8 1024.9,286.9 1032.8,286.4 1040.8,286.4 1056.8,286.9 1065,289.5 1070.9,290.8 1086.9,290.8 1094.9,292.8 1103,294.6 1110.9,295.3 1118.8,296.6 1126.7,295.1 1140.8,294.6 1156.9,294.6 1172.9,294.6 1181.1,293.3 1195,293.1 1210.9,291.6 1227,291.4 1242.9,285.8 1257.1,282 1273,277.8 1289,273.9 1304.9,270.1 1319.1,270.3 1327,273.2 1335,274.9 1342.9,276.4 1359,276.4 1366.9,279.1 1374.9,276.8 1380.9,279.1 1397,279.1 1405,281.2 1412.9,281.2 1421,279.5 1429,277.4 1436.9,275.3 1443,273.2 1450.9,269.1 1459.1,267 1467,266.6 1474.9,264.5 1482.9,264.5 1504.4,265 1512.6,267.9 1520.9,269.4 1545,269.4 1552.9,268.5 1560.9,267.4 1567.1,269.4 1582.9,270 1607.1,272.4 1615,276.8 1622.9,281.2 1629.1,285.6 1637.1,291.5 1646.5,296.2 1653,300.6 1668.2,307.6 1684.4,319.5 1690.9,328.7 1706.1,339.6 1715.8,349.3 1738.6,365.6 1748.3,376.4 1761.3,389.4 1767.8,393.7 1776.5,398.1 1792.7,410 1800.3,413.8 1808.7,419.6 1814.9,424.6 1823,429.7 1831,433.9 1839,439.9 1846.9,443.3 1854.8,445 1862.9,447.5 1870.9,450.1 1876.9,451.8 1884.9,453.8 1892.9,455.7 1901,457.4 1908.9,457.4 1917,459.1 1925,461.5 1933,465.4 1939,467.4 1947,467.4 1963,467.4 1978.9,467.4 1987.1,465.7 1994.9,463.7 2001.1,461.7 2009,457.8 2016.9,453.5 2024.9,449.2 2032.9,445 2040.9,440.7 2049,436.5 2057,433.9 2070.9,428.7 2079,426.4 2087,422.5 2095,418.7 2102.9,414 2111,408.6 2119,404.7 2125,402.4 2132.9,400.1 2141,397 2149,394.7 2157.1,391.6 2164.9,389.3 2173,387 2180.9,384.6 2186.9,383.1 2194.9,381.2 2203,379.7 2211,379.2 2218.9,375.4 2227.1,372.6" fill="none" stroke="#0b18e0" stroke-width="4.4" stroke-linejoin="round" stroke-linecap="round" />
</g>
<circle cx="259" cy="405.3" r="14.9" fill="#4196f5" stroke="#3a88e0" stroke-width="0.8"/>
<path d="M253 396.5 L255.2 396.8 L254 400 Z" fill="#fff"/>
<circle cx="267.1" cy="406.8" r="14.9" fill="#4196f5" stroke="#3a88e0" stroke-width="0.8"/>
<text x="267.2" y="414.1" font-size="21" fill="#fff" font-weight="normal" text-anchor="middle"  stroke="#fff" stroke-width="0.7">P</text>
<path d="M17.1 869.5V865.8M25.1 869.5V863.4M33.1 869.5V859.1M41.1 869.5V859.4M49.1 869.5V859.2M57.1 869.5V863M65.1 869.5V867.8M71.1 869.5V870.7M79.1 869.5V871.8M87.1 869.5V874.2M95.1 869.5V872.3M103.1 869.5V868.3M111.1 869.5V864M119.1 869.5V859.6M127.1 869.5V855.6M133.1 869.5V852.6M141.1 869.5V849.7M149.1 869.5V849.4M157.1 869.5V849.2M165.1 869.5V848.8M173.1 869.5V846.8M181.1 869.5V845.6M189.1 869.5V854.7M195.1 869.5V858.7M203.1 869.5V863.9M211.1 869.5V863.8M219.1 869.5V861.9M227.1 869.5V861M235.1 869.5V863.2M243.1 869.5V866.1M251.1 869.5V868.2M257.1 869.5V868.3M265.1 869.5V870.7M273.1 869.5V873.9M281.1 869.5V885.5M289.1 869.5V893.9M297.1 869.5V891.9M305.1 869.5V887.9M313.1 869.5V885.6M319.1 869.5V880.8M327.1 869.5V873.1M335.1 869.5V867.3M343.1 869.5V865.5M351.1 869.5V863.1M359.1 869.5V861.4M367.1 869.5V859.2M375.1 869.5V855M381.1 869.5V855.9M389.1 869.5V860.9M397.1 869.5V868.3M405.1 869.5V868.3M413.1 869.5V867.4M421.1 869.5V867.9M429.1 869.5V868.3M437.1 869.5V878.3M443.1 869.5V883.1M451.1 869.5V889.7M459.1 869.5V896.3M467.1 869.5V892.8M475.1 869.5V884.5M483.1 869.5V880.6M491.1 869.5V876.5M499.1 869.5V875.3M505.1 869.5V880.7M513.1 869.5V879.2M521.1 869.5V875.3M529.1 869.5V865.9M537.1 869.5V863.2M545.1 869.5V855.7M553.1 869.5V851.9M561.1 869.5V851.5M567.1 869.5V848.1M575.1 869.5V843.1M583.1 869.5V840.6M591.1 869.5V840.3M599.1 869.5V836.4M607.1 869.5V837.3M615.1 869.5V839.1M623.1 869.5V840.3M629.1 869.5V839.4M637.1 869.5V838.5M645.1 869.5V836.2M653.1 869.5V836M661.1 869.5V841.9M669.1 869.5V845.5M677.1 869.5V843.7M685.1 869.5V848.1M691.1 869.5V853.3M699.1 869.5V857.2M707.1 869.5V861.2M715.1 869.5V865.2M723.1 869.5V871.5M731.1 869.5V872.4M739.1 869.5V876.2M747.1 869.5V878M753.1 869.5V885M761.1 869.5V892.2M769.1 869.5V899.2M777.1 869.5V909.1M785.1 869.5V911.2M793.1 869.5V911.2M801.1 869.5V909.2M809.1 869.5V907.9M815.1 869.5V904.9M823.1 869.5V902.7M831.1 869.5V902.5M839.1 869.5V900.6M847.1 869.5V905.4M855.1 869.5V903.6M863.1 869.5V897.6M871.1 869.5V896.3M877.1 869.5V894.2M885.1 869.5V888.2M893.1 869.5V876.6M901.1 869.5V868.3M909.1 869.5V858.6M917.1 869.5V849M925.1 869.5V835M933.1 869.5V821.9M939.1 869.5V810.6M947.1 869.5V803.3M955.1 869.5V804.3M963.1 869.5V809M971.1 869.5V817.2M979.1 869.5V829.3M987.1 869.5V843M995.1 869.5V852.3M1003.1 869.5V857.3M1009.1 869.5V857.4M1017.1 869.5V859.3M1025.1 869.5V864.9M1033.1 869.5V883.1M1041.1 869.5V897.6M1049.1 869.5V908.6M1057.1 869.5V914M1065.1 869.5V922.1M1071.1 869.5V925.5M1079.1 869.5V918.2M1087.1 869.5V912.1M1095.1 869.5V906.1M1103.1 869.5V901.9M1111.1 869.5V889M1119.1 869.5V878.4M1127.1 869.5V862.6M1133.1 869.5V856.3M1141.1 869.5V857.1M1149.1 869.5V857.3M1157.1 869.5V860.4M1165.1 869.5V872.6M1173.1 869.5V881.8M1181.1 869.5V883.5M1189.1 869.5V881.3M1195.1 869.5V877.9M1203.1 869.5V880.2M1211.1 869.5V882.5M1219.1 869.5V889M1227.1 869.5V885.1M1235.1 869.5V875.2M1243.1 869.5V868.3M1251.1 869.5V868.3M1257.1 869.5V867.2M1265.1 869.5V865.2M1273.1 869.5V859.3M1281.1 869.5V855.7M1289.1 869.5V847.6M1297.1 869.5V840M1305.1 869.5V838.5M1313.1 869.5V840.3M1319.1 869.5V844.5M1327.1 869.5V852.7M1335.1 869.5V859.2M1343.1 869.5V863M1351.1 869.5V861.4M1359.1 869.5V856.2M1367.1 869.5V852.2M1375.1 869.5V851.2M1381.1 869.5V853.7M1389.1 869.5V857M1397.1 869.5V855.5M1405.1 869.5V855.4M1413.1 869.5V857.5M1421.1 869.5V861.6M1429.1 869.5V863.8M1437.1 869.5V866M1443.1 869.5V867.8M1451.1 869.5V871.3M1459.1 869.5V877.8M1467.1 869.5V885.5M1475.1 869.5V895.5M1483.1 869.5V902.4M1491.1 869.5V908.1M1499.1 869.5V908.7M1505.1 869.5V906M1513.1 869.5V903.5M1521.1 869.5V902M1529.1 869.5V896.9M1537.1 869.5V889M1545.1 869.5V878.2M1553.1 869.5V874M1561.1 869.5V872.9M1567.1 869.5V876.5M1575.1 869.5V881.7M1583.1 869.5V884M1591.1 869.5V889.5M1599.1 869.5V891.7M1607.1 869.5V897.8M1615.1 869.5V910.2M1623.1 869.5V918.5M1629.1 869.5V920.2M1637.1 869.5V923.5M1645.1 869.5V925.1M1653.1 869.5V921.6M1661.1 869.5V907.4M1669.1 869.5V885.9M1677.1 869.5V875.3M1685.1 869.5V865.1M1691.1 869.5V863.1M1699.1 869.5V861.4M1707.1 869.5V861.8M1715.1 869.5V868.3M1723.1 869.5V868.3M1731.1 869.5V863.2M1739.1 869.5V852.2M1747.1 869.5V845.8M1753.1 869.5V838.4M1761.1 869.5V832.1M1769.1 869.5V825.4M1777.1 869.5V820.6M1785.1 869.5V811.8M1793.1 869.5V807.8M1801.1 869.5V809M1809.1 869.5V813M1815.1 869.5V816M1823.1 869.5V813.8M1831.1 869.5V820.8M1839.1 869.5V828.8M1847.1 869.5V836.8M1855.1 869.5V843.8M1863.1 869.5V851.1M1871.1 869.5V853.3M1877.1 869.5V853.9M1885.1 869.5V861.3M1893.1 869.5V863.5M1901.1 869.5V864.2M1909.1 869.5V866.2M1917.1 869.5V873.4M1925.1 869.5V874.8M1933.1 869.5V876.6M1939.1 869.5V872.7M1947.1 869.5V871.4M1955.1 869.5V867.9M1963.1 869.5V867.4M1971.1 869.5V868.3M1979.1 869.5V871.4M1987.1 869.5V870.7M1995.1 869.5V867.3M2001.1 869.5V870.7M2009.1 869.5V872.3M2017.1 869.5V876.6M2025.1 869.5V879.9M2033.1 869.5V885.2M2041.1 869.5V889.7M2049.1 869.5V890.9M2057.1 869.5V889M2063.1 869.5V887M2071.1 869.5V887.1M2079.1 869.5V888.7M2087.1 869.5V889.4M2095.1 869.5V885.5M2103.1 869.5V881.9M2111.1 869.5V878M2119.1 869.5V873.9M2125.1 869.5V872M2133.1 869.5V871.6M2141.1 869.5V867.1M2149.1 869.5V868.3M2157.1 869.5V866.2M2165.1 869.5V864.2M2173.1 869.5V860.6M2181.1 869.5V856.2M2187.1 869.5V852.7M2195.1 869.5V851.3M2203.1 869.5V849.4M2211.1 869.5V846.8M2219.1 869.5V845M2227.1 869.5V845" stroke="#de5448" stroke-width="2" fill="none"/>
<polyline points="15.8,906.6 24.6,907 41.1,907 56.6,903.3 65.3,902.7 77.9,898.9 87.6,898.5 104.1,898.9 120.6,898.9 128.4,896.9 136.2,894 143,890.7 150.7,886.8 158.5,882.4 166.2,876.5 175,869.8 180.8,866.8 188.6,860 194.4,856.2 203.1,852.7 210.9,850.7 219.6,848.4 227.4,844.9 234.2,843 242.9,842.6 250.7,842.6 258.4,841 273,840.6 281.7,843.5 289.5,847.8 297.3,852.3 307,857.1 313.8,861 320.6,864.5 328.3,867.8 336.1,869.8 344.8,871.1 359.4,871.1 367.1,869.4 374.9,867.8 380.7,864.5 388.5,862 396.3,861 406,859.7 413.7,858.7 421.5,856.2 429.3,854.8 437,856.2 444.8,859.7 452.5,863.9 460.3,867.8 467.1,871.7 474.9,875.6 483.6,879.8 497.2,886.8 504.6,891.5 513.3,895.4 521.1,896.9 528.8,896.5 536.6,895 545.3,893 553.1,892.7 560.8,889.2 568.6,886.2 576.4,881.4 584.1,875.6 590.9,870.1 599.7,862.4 608.4,854.2 616.2,845.5 623.9,836.8 629.8,830.5 637.5,822.8 645.3,815.4 653,806.7 660.8,798.9 668.6,793.1 676.3,787.3 684.1,781.4 691.9,774.3 699.6,768.8 707.4,765.3 715.2,763.4 722.9,761.1 730.7,760.7 747.2,760.7 754,763 761.7,766.9 769.5,770.8 777.3,778.5 785,786.3 792.8,794.1 800.6,801.8 808.3,811.5 816.1,823.2 823.9,832.9 831.6,842.6 839.4,850.3 847.1,859.1 855.9,868.8 861.7,874.6 868.5,881.8 877.2,890.1 885,896 893.7,900.8 901.5,902.7 909.3,905.1 917,903.7 924.8,899.8 932.5,895 940.3,886.2 948.1,874.6 955.8,861 963.6,846.5 971.4,832.9 979.1,819.3 987.5,808.6 995.2,799.9 1003,793.1 1009.8,786.7 1017.6,782.8 1025.3,779.5 1033.1,780.5 1040.8,782.8 1048.6,788.2 1056.4,794.1 1064.1,802.2 1071.9,814.8 1079.7,827 1087.4,838.7 1095.2,850.3 1103,860 1110.7,868.8 1118.5,874.6 1125.3,879.1 1134,881 1141.8,879.1 1149.5,879.1 1157.3,876.9 1164.1,875.2 1172.8,874.6 1189.3,874.6 1195.2,876.5 1202.9,878.5 1210.7,882.4 1219.4,886.8 1227.2,891.1 1234.9,895 1249.5,895 1257.3,896.9 1281.5,896.9 1289.3,891.5 1297.1,887.6 1304.8,882.4 1313.6,876 1321.3,870.1 1329.1,863.9 1335.9,860.4 1342.7,855.2 1351.4,850.7 1359.2,846.8 1366.9,844.9 1374.7,841.6 1389.3,835.2 1397,832.9 1404.8,829 1413.5,824.7 1421.3,820.6 1435.8,816.8 1443.6,816.4 1451.4,814.8 1459.1,814.8 1467.3,817.4 1476,822.8 1484.6,829.7 1493.3,836.9 1500.9,845.5 1506.3,852 1515,861.8 1522.5,868.9 1530.1,878 1536.6,884.5 1545.3,890.6 1552.9,892.5 1560.4,896 1568,898.6 1575.6,900.8 1583.2,904.7 1590.8,906.8 1598.3,910.5 1607,914.8 1614.6,921.3 1622.2,931.1 1629.7,944.1 1637.3,953.8 1644.9,965.3 1652.9,976.5 1660.5,987.4 1668.7,998.2 1677.4,1005.8 1685,1011.2 1692.5,1013.8 1700.1,1015.1 1706.6,1015.1 1714.2,1012.9 1722.8,1011.2 1730.4,1009 1739.1,1006.9 1746.7,1003 1754.2,998.2 1761.8,991.7 1769.4,984.1 1777,975.5 1784.6,965.7 1793.2,951.6 1800.8,938.6 1809.5,922.4 1816,908.3 1822.5,897.5 1831.1,883.4 1839.8,870.4 1848.4,857.4 1856,847.7 1863.6,839 1870.1,833.6 1877.7,828.2 1885.3,825 1899.2,820.7 1909.7,818 1916.7,816.8 1923.7,817.5 1932.4,819.3 1939.4,819.4 1948.1,818.9 1955.1,818 1963,818.6 1970.8,820 1978.7,821 1986.6,821.5 1994.4,821 2002.3,820.7 2016.3,820.7 2025,822.9 2033.7,825.6 2041.6,829 2049.5,831.5 2056.5,835 2062.6,839 2070.4,845.1 2079.2,850 2087,855.3 2094.9,859.1 2102.7,862.6 2112.4,865.2 2120.2,869.2 2128.1,871.7 2132.4,872.7 2141.2,873.4 2149,873.4 2157.8,873.1 2166.5,870.5 2175.2,868.2 2182.2,866.4 2188.4,864.3 2196.2,860.8 2203.2,857 2211.1,853 2218.9,846.9 2227.1,840.8" fill="none" stroke="#e25d55" stroke-width="1.15" stroke-linejoin="round" stroke-linecap="round" />
<polyline points="15.8,903.3 24.6,901.2 33.3,896.5 41.1,896.9 49.8,894.6 56.6,896.5 65.3,901.2 77.9,900.8 87.6,903.3 95.4,901.4 104.1,898.5 112.9,892.1 120.6,888.2 128.4,882.4 136.2,875.6 143,870.3 150.7,866.8 158.5,862 166.2,855.8 175,846.5 180.8,842.6 188.6,844.9 194.4,844.9 203.1,847 210.9,845.1 219.6,840.6 227.4,836.4 234.2,836.4 242.9,839.1 250.7,841.2 258.4,840.6 266.2,841.6 273,844.9 281.7,860.4 289.5,872.7 297.3,874.6 307,874.6 313.8,876.9 320.6,874.6 328.3,870.1 336.1,866.8 344.8,866.8 351.6,864.5 359.4,863 367.1,859.1 374.9,853.3 380.7,850.7 388.5,852.7 396.3,860.6 406,858.5 413.7,856.6 421.5,854.6 429.3,854.6 437,864.9 444.8,874.6 452.5,885.3 460.3,895.6 467.1,895 474.9,890.7 483.6,890.7 497.2,890.7 504.6,902.7 513.3,905.1 521.1,902.7 528.8,893 536.6,889.2 545.3,879.1 554.1,874.6 561.8,870.7 568.6,863.9 576.4,854.2 584.1,846.5 590.9,841 599.7,829 608.4,822.2 616.2,815.4 623.9,807.6 629.8,800.3 637.5,791.7 645.3,782 653,773.1 660.8,771.1 668.6,769.2 676.3,761.1 684.1,759.1 691.9,758.7 699.6,756.8 707.4,757.2 715.2,759.1 722.9,763 730.7,763.4 738.4,767.3 747.2,769.2 754,779.5 761.7,790.2 769.5,800.8 777.3,818.3 785,828 792.8,835.8 800.6,841.6 808.3,850.3 816.1,858.1 823.9,865.9 831.6,875.6 839.4,881.4 847.1,895 855.9,902.7 861.7,902.7 868.5,909.5 877.2,914.8 885,914.8 893.7,907 901.5,901.2 909.3,894 917,883.3 924.8,865.9 932.5,848.4 940.3,825.1 948.1,807.6 955.8,796 963.6,786.3 971.4,780.9 979.1,779.1 987.5,782.8 995.2,782.8 1003,780.9 1009.8,774.6 1017.6,772.7 1025.3,775 1033.1,794.1 1040.8,810.6 1048.6,827 1056.4,837.7 1064.1,854.2 1071.9,871.3 1079.7,875.2 1087.4,881 1095.2,886.8 1103,892.7 1110.7,888.8 1118.5,884.9 1125.3,874 1134,866.8 1141.8,866.8 1156.3,866.8 1164.1,877.1 1172.8,886.8 1180.6,888.8 1187.4,886.8 1195.2,884.9 1202.9,889.2 1210.7,895 1219.4,906.6 1227.2,906.6 1234.9,900.8 1242.7,895 1249.5,895 1257.3,894.6 1265,892.7 1272.8,886.8 1281.5,883 1289.3,869.4 1297.1,858.1 1304.8,851.3 1313.6,846.8 1321.3,846.8 1329.1,849.4 1335.9,850.7 1342.7,848.8 1351.4,842.6 1359.2,833.5 1366.9,827.6 1374.7,823.2 1389.3,822.8 1397,818.9 1404.8,814.8 1413.5,812.9 1435.8,812.9 1443.6,814.8 1451.4,816.8 1459.1,823.2 1467.3,833.6 1476,849.9 1484.6,863.9 1493.3,876.9 1500.9,884.5 1506.3,887.8 1515,895.3 1522.5,901.2 1530.1,904.7 1536.6,904.7 1545.3,899 1552.9,897.1 1560.4,899 1568,906.2 1575.6,913.3 1583.2,919.2 1590.8,926.7 1598.3,932.2 1607,943 1614.6,961.4 1622.2,979.8 1629.7,995 1637.3,1007.9 1644.9,1020.9 1652.9,1028.9 1660.5,1027 1668.7,1015.1 1677.4,1011.2 1685,1006.9 1706.6,1006.9 1714.2,1012.3 1722.8,1010.8 1730.4,1003.6 1739.1,989.5 1746.7,979.8 1754.2,965.7 1761.8,953.8 1769.4,939.7 1777,926.7 1784.6,908.3 1793.2,889.9 1800.8,878 1809.5,866.1 1816,855.3 1822.5,841.2 1831.1,834.7 1839.8,830.4 1848.4,826 1856,822.8 1863.6,821.1 1870.1,817.4 1877.7,812.6 1885.3,817 1892.2,816.8 1899.2,814.9 1909.7,814.9 1916.7,820.7 1923.7,822.4 1932.4,826.8 1939.4,822.4 1948.1,820.7 1955.1,816.5 1963,816.5 1970.8,818.9 1978.7,822.9 1986.6,822.9 1994.4,818.6 2002.3,821.2 2010.2,823.8 2018,828.5 2025,833.2 2033.7,841.6 2041.6,849.5 2049.5,853 2056.5,854.7 2062.6,856.5 2070.4,862.6 2079.2,869.2 2087,875.2 2102.7,875.2 2112.4,873.1 2124.6,873.1 2132.4,875.2 2141.2,871 2149,873.1 2157.8,869.6 2166.5,864.9 2175.2,858.2 2182.2,852.5 2188.4,846.9 2196.2,842.5 2203.2,836.9 2211.1,830.3 2218.9,822.4 2227.1,816.3" fill="none" stroke="#524fe3" stroke-width="1.15" stroke-linejoin="round" stroke-linecap="round" />
<path d="M1792.8 805.9 L2280.6 846.1" stroke="#d9544d" stroke-width="1.5" fill="none"/>
<polyline points="16.8,1187.4 24.6,1206.8 32.9,1203 41.1,1214.6 48.8,1214.6 57,1232.7 64.9,1236.5 71.1,1226.8 79.3,1230.7 87.1,1250.9 95,1216.9 103.2,1210.7 110.9,1185.1 118.7,1187 126.8,1174.8 133.3,1163.2 141,1157 148.8,1158.9 156.9,1160.8 164.7,1127.6 172.7,1115 180.8,1127.6 188.8,1166.7 195,1165.1 202.9,1185.1 210.9,1147.3 219,1138.5 226.8,1121 234.8,1164.7 242.9,1164.7 250.9,1174.8 256.9,1154.8 265,1153.1 273,1202 281.2,1261.2 289.1,1267 296.9,1210.7 305,1194.8 312.8,1211.1 320.9,1189 327.4,1170.9 335.1,1169 342.9,1190.9 351,1178.9 359,1178.9 367.1,1161.2 374.9,1143 381.1,1157.3 389.5,1195.2 397.2,1227.2 405,1175.4 413.1,1169 420.9,1170.9 429.3,1181.6 437,1230.7 444.8,1240.8 451.6,1249.5 459,1269 467.1,1210.7 474.9,1190.9 483,1208.8 491,1203 499.1,1216.9 505,1252.8 512.9,1230.7 521.1,1208.8 529,1170.9 537,1190.7 545.1,1170.9 553.1,1180.6 561,1183 567.1,1167 575,1148.6 583.2,1150.6 590.9,1148.6 598.9,1119.1 606.8,1137 614.8,1131.1 623,1119.1 629,1106.9 636.9,1103 644.7,1087.1 652.7,1081.1 660.8,1104.9 668.8,1101.1 676.7,1081.1 684.9,1096.8 690.9,1098.7 699,1091 706.8,1088.8 714.8,1096.8 722.9,1106.9 730.7,1092.9 738.8,1108.8 747,1103 753,1142.8 761.2,1169 769.1,1197.1 776.9,1224.9 785,1214.6 792.8,1194.8 800.9,1197.1 808.9,1223 815.1,1213.1 823.1,1232.7 831,1246.6 839,1233 847.1,1279.2 854.9,1248.6 863.1,1221 871,1256.9 877.2,1236.5 885,1224.9 893.1,1192.9 900.9,1194.8 909.3,1170.9 917,1166.7 925,1127.3 933.1,1115 939,1104.9 946.9,1083 954.9,1108.8 963,1099.1 971,1112.7 979.1,1125.3 986.9,1140.8 995.2,1132.7 1003,1120.9 1008.8,1104.9 1017,1110.8 1025.3,1125.7 1033.1,1198.5 1041,1216.9 1049,1224.7 1057,1216.9 1065.1,1247 1070.9,1249 1079.1,1208.8 1086.8,1220.8 1095.2,1229.2 1103,1228.8 1111.1,1192.9 1119.1,1184.5 1126.8,1153.1 1133,1167 1140.8,1192.9 1149.5,1190.9 1156.9,1190.9 1164.9,1238.9 1172.8,1236.5 1181,1208.8 1188.9,1201 1195.2,1198.7 1202.9,1222.8 1210.9,1238.9 1219,1265.1 1227,1211.1 1235.1,1194.8 1243.1,1192.9 1251.1,1203 1256.9,1219.1 1265,1201 1272.8,1183 1281.1,1182.6 1288.9,1150.9 1297.1,1141.2 1305,1153.1 1313.2,1163.2 1319,1169 1327.1,1187 1334.9,1184.9 1343.1,1170.5 1351,1145.1 1359,1124.9 1366.9,1137 1375.1,1128.8 1380.9,1160.8 1388.9,1150.9 1397,1138.9 1405,1131.1 1413.1,1130.8 1421.1,1132.7 1429,1130.8 1437,1132.7 1443,1142.8 1451,1147.1 1459.1,1170.9 1465,1203 1466.8,1219.1 1474.7,1250.9 1483,1258.8 1490.8,1271.1 1498.9,1244.9 1505.2,1244.9 1513.3,1259.5 1520.9,1268.9 1529,1250.5 1536.8,1238.8 1544.9,1188.8 1553.2,1212.3 1561.3,1233.7 1567.3,1252.7 1575.2,1272.9 1583.2,1275.2 1590.9,1292.7 1598.9,1287 1607,1311 1614.9,1340.7 1622.9,1348.7 1628.8,1335 1636.9,1342.4 1644.7,1352.5 1653,1346.5 1660.9,1298.7 1668.9,1248.9 1676.6,1266.2 1684.6,1272.9 1690.9,1282.6 1699,1290.9 1707.1,1294.9 1714.9,1310.6 1722.8,1285.9 1730.8,1250.9 1738.9,1222.9 1746.8,1228.5 1753.3,1219.5 1761.1,1206.7 1769,1198.2 1777.1,1174.2 1784.9,1151.3 1793,1141 1801.1,1146.8 1808.9,1154.5 1815.2,1133.4 1823,1110.7 1830.9,1148.9 1839,1146.8 1847,1148.9 1854.9,1141 1862.7,1138.8 1870.6,1133.4 1876.9,1119.3 1884.7,1164.8 1893,1150.9 1893,1150.7 1901,1139 1909,1148.8 1916.8,1174.9 1925,1164.8 1933,1164.8 1939.1,1137.2 1947.2,1131 1955.1,1126.9 1963.2,1129.1 1971.1,1160.7 1979.1,1156.8 1987.1,1142 1995.1,1121 2001,1158.9 2009,1155 2017,1162.8 2025,1187 2033,1212.8 2041,1211.1 2049,1200.7 2056.6,1188.8 2063.2,1193.1 2071.2,1221.2 2079,1239 2086.9,1228.8 2094.9,1208.7 2102.9,1195 2110.9,1195 2118.9,1185.1 2125.1,1199 2132.9,1215 2140.9,1174.9 2148.9,1213.2 2156.9,1165.2 2165,1165.2 2173,1149.2 2181,1142.6 2187.2,1131 2195.2,1125.1 2203.2,1115 2210.8,1108.6 2218.8,1085.1 2226.9,1092.6" fill="none" stroke="#95499f" stroke-width="1.05" stroke-linejoin="round" stroke-linecap="round" />
<rect x="15.8" y="722" width="2632.2" height="2" fill="#4f5357"/>
<rect x="15.8" y="1046.5" width="2632.2" height="2" fill="#4f5357"/>
<rect x="15.8" y="1371.8" width="2632.2" height="2" fill="#4f5357"/>
<rect x="2646" y="80" width="2" height="1293.8" fill="#4f5357"/>
<rect x="165.8" y="1373" width="2" height="6" fill="#4f5357"/>
<rect x="327.6" y="1373" width="2" height="6" fill="#4f5357"/>
<rect x="483.9" y="1373" width="2" height="6" fill="#4f5357"/>
<rect x="661.7" y="1373" width="2" height="6" fill="#4f5357"/>
<rect x="815.7" y="1373" width="2" height="6" fill="#4f5357"/>
<rect x="980.3" y="1373" width="2" height="6" fill="#4f5357"/>
<rect x="1149.8" y="1373" width="2" height="6" fill="#4f5357"/>
<rect x="1314.5" y="1373" width="2" height="6" fill="#4f5357"/>
<rect x="1491.6" y="1373" width="2" height="6" fill="#4f5357"/>
<rect x="1661.9" y="1373" width="2" height="6" fill="#4f5357"/>
<rect x="1824" y="1373" width="2" height="6" fill="#4f5357"/>
<rect x="1996" y="1373" width="2" height="6" fill="#4f5357"/>
<rect x="2158" y="1373" width="2" height="6" fill="#4f5357"/>
<rect x="2327.7" y="1373" width="2" height="6" fill="#4f5357"/>
<rect x="2484" y="1373" width="2" height="6" fill="#4f5357"/>
<rect x="2647" y="132.8" width="6" height="1.6" fill="#4f5357"/>
<text x="2660" y="141.5" font-size="22" fill="#4a4a4a" font-weight="normal" text-anchor="start"  stroke="#4a4a4a" stroke-width="0.3">6400.00</text>
<rect x="2647" y="212.4" width="6" height="1.6" fill="#4f5357"/>
<text x="2660" y="221.1" font-size="22" fill="#4a4a4a" font-weight="normal" text-anchor="start"  stroke="#4a4a4a" stroke-width="0.3">6200.00</text>
<rect x="2647" y="297.2" width="6" height="1.6" fill="#4f5357"/>
<text x="2660" y="305.9" font-size="22" fill="#4a4a4a" font-weight="normal" text-anchor="start"  stroke="#4a4a4a" stroke-width="0.3">6000.00</text>
<rect x="2647" y="468.2" width="6" height="1.6" fill="#4f5357"/>
<text x="2660" y="476.9" font-size="22" fill="#4a4a4a" font-weight="normal" text-anchor="start"  stroke="#4a4a4a" stroke-width="0.3">5600.00</text>
<rect x="2647" y="536.6" width="6" height="1.6" fill="#4f5357"/>
<text x="2660" y="545.3" font-size="22" fill="#4a4a4a" font-weight="normal" text-anchor="start"  stroke="#4a4a4a" stroke-width="0.3">5450.00</text>
<rect x="2647" y="592.4" width="6" height="1.6" fill="#4f5357"/>
<text x="2660" y="601.1" font-size="22" fill="#4a4a4a" font-weight="normal" text-anchor="start"  stroke="#4a4a4a" stroke-width="0.3">5330.00</text>
<rect x="2647" y="650.2" width="6" height="1.6" fill="#4f5357"/>
<text x="2660" y="658.9" font-size="22" fill="#4a4a4a" font-weight="normal" text-anchor="start"  stroke="#4a4a4a" stroke-width="0.3">5205.00</text>
<rect x="2647" y="709.9" width="6" height="1.6" fill="#4f5357"/>
<text x="2660" y="718.6" font-size="22" fill="#4a4a4a" font-weight="normal" text-anchor="start"  stroke="#4a4a4a" stroke-width="0.3">5085.00</text>
<rect x="2647" y="867.8" width="6" height="1.6" fill="#4f5357"/>
<text x="2660" y="876.5" font-size="22" fill="#4a4a4a" font-weight="normal" text-anchor="start"  stroke="#4a4a4a" stroke-width="0.3">0.0000</text>
<rect x="2647" y="950.2" width="6" height="1.6" fill="#4f5357"/>
<text x="2660" y="958.9" font-size="22" fill="#4a4a4a" font-weight="normal" text-anchor="start"  stroke="#4a4a4a" stroke-width="0.3">-100.000</text>
<rect x="2647" y="1033.9" width="6" height="1.6" fill="#4f5357"/>
<text x="2660" y="1042.6" font-size="22" fill="#4a4a4a" font-weight="normal" text-anchor="start"  stroke="#4a4a4a" stroke-width="0.3">-200.000</text>
<rect x="2647" y="1141.7" width="6" height="1.6" fill="#4f5357"/>
<text x="2660" y="1150.4" font-size="22" fill="#4a4a4a" font-weight="normal" text-anchor="start"  stroke="#4a4a4a" stroke-width="0.3">60.0000</text>
<rect x="2647" y="1240" width="6" height="1.6" fill="#4f5357"/>
<text x="2660" y="1248.7" font-size="22" fill="#4a4a4a" font-weight="normal" text-anchor="start"  stroke="#4a4a4a" stroke-width="0.3">40.0000</text>
<rect x="2647" y="1338.2" width="6" height="1.6" fill="#4f5357"/>
<text x="2660" y="1346.9" font-size="22" fill="#4a4a4a" font-weight="normal" text-anchor="start"  stroke="#4a4a4a" stroke-width="0.3">20.0000</text>
<rect x="2646.5" y="268" width="100" height="32" fill="#4c72de"/>
<rect x="2647" y="283.3" width="6" height="1.4" fill="#fff" opacity="0.55"/>
<text x="2660" y="291.9" font-size="22" fill="#fff" font-weight="normal" text-anchor="start"  stroke="#fff" stroke-width="0.35">6031.64</text>
<rect x="2646.5" y="330.4" width="100" height="31.4" fill="#e63322"/>
<rect x="2647" y="345.4" width="6" height="1.4" fill="#fff" opacity="0.55"/>
<text x="2660" y="354" font-size="22" fill="#fff" font-weight="normal" text-anchor="start"  stroke="#fff" stroke-width="0.35">5884.02</text>
<rect x="2646.5" y="361.8" width="100" height="31.6" fill="#0a1cf2"/>
<rect x="2647" y="376.9" width="6" height="1.4" fill="#fff" opacity="0.55"/>
<text x="2660" y="385.5" font-size="22" fill="#fff" font-weight="normal" text-anchor="start"  stroke="#fff" stroke-width="0.35">5817.29</text>
<rect x="2646.5" y="715.3" width="100" height="7.4" fill="#e63322"/>
<rect x="2646.5" y="764" width="100" height="32" fill="#0a1cf2"/>
<rect x="2647" y="779.3" width="6" height="1.4" fill="#fff" opacity="0.55"/>
<text x="2660" y="787.9" font-size="22" fill="#fff" font-weight="normal" text-anchor="start"  stroke="#fff" stroke-width="0.35">60.7830</text>
<rect x="2646.5" y="796" width="100" height="32" fill="#e63322"/>
<rect x="2647" y="811.3" width="6" height="1.4" fill="#fff" opacity="0.55"/>
<text x="2660" y="819.9" font-size="22" fill="#fff" font-weight="normal" text-anchor="start"  stroke="#fff" stroke-width="0.35">31.6773</text>
<rect x="2646.5" y="828" width="100" height="32" fill="#e63322"/>
<rect x="2647" y="843.3" width="6" height="1.4" fill="#fff" opacity="0.55"/>
<text x="2660" y="851.9" font-size="22" fill="#fff" font-weight="normal" text-anchor="start"  stroke="#fff" stroke-width="0.35">29.1058</text>
<rect x="2646.5" y="1078.5" width="100" height="31.2" fill="#7b1f86"/>
<rect x="2647" y="1093.4" width="6" height="1.4" fill="#fff" opacity="0.55"/>
<text x="2660" y="1102" font-size="22" fill="#fff" font-weight="normal" text-anchor="start"  stroke="#fff" stroke-width="0.35">70.4875</text>
<rect x="27.2" y="106.1" width="23.6" height="23.4" fill="#fff" stroke="#6a6a6a" stroke-width="1.7" rx="1.5"/>
<path d="M31.8 117.8 H46.3" stroke="#6a6a6a" stroke-width="1.8"/>
<text x="65.4" y="131.1" font-size="32" fill="#4d4d4d" font-weight="normal" text-anchor="start" textLength="51.8" lengthAdjust="spacingAndGlyphs"  stroke="#4d4d4d" stroke-width="0.9">PSI,</text>
<text x="132.4" y="131.1" font-size="32" fill="#4d4d4d" font-weight="normal" text-anchor="start" textLength="133.9" lengthAdjust="spacingAndGlyphs"  stroke="#4d4d4d" stroke-width="0.9">Portugal,</text>
<text x="281.4" y="131.1" font-size="32" fill="#4d4d4d" font-weight="normal" text-anchor="start" textLength="29.2" lengthAdjust="spacingAndGlyphs"  stroke="#4d4d4d" stroke-width="0.9">D,</text>
<text x="323.4" y="131.1" font-size="32" fill="#4d4d4d" font-weight="normal" text-anchor="start" textLength="93.7" lengthAdjust="spacingAndGlyphs"  stroke="#4d4d4d" stroke-width="0.9">Lisboa</text>
<path d="M428 117 H441.6 L434.8 123.5 Z" fill="#c6c6c6"/>
<rect x="462.8" y="105.9" width="27.8" height="27.8" fill="#d8d8d8"/>
<path d="M466.9 119.8 Q476.7 104.1 486.5 119.8 Q476.7 135.5 466.9 119.8 Z" fill="#fff"/>
<circle cx="476.7" cy="119.8" r="5.1" fill="#d8d8d8"/><circle cx="476.7" cy="119.8" r="2.4" fill="#fff"/>
<rect x="496.7" y="105.9" width="27.8" height="27.8" fill="#d8d8d8"/>
<path d="M517.6 117.8 L520 117.9 L520 121.7 L517.6 121.8 L516.9 123.3 L518.6 125.1 L515.9 127.8 L514.1 126.1 L512.6 126.8 L512.5 129.2 L508.7 129.2 L508.6 126.8 L507.1 126.1 L505.3 127.8 L502.6 125.1 L504.3 123.3 L503.6 121.8 L501.2 121.7 L501.2 117.9 L503.6 117.8 L504.3 116.3 L502.6 114.5 L505.3 111.8 L507.1 113.5 L508.6 112.8 L508.7 110.4 L512.5 110.4 L512.6 112.8 L514.1 113.5 L515.9 111.8 L518.6 114.5 L516.9 116.3 Z M514.2 119.8 A3.612996389891697 3.612996389891697 0 1 0 507 119.8 A3.612996389891697 3.612996389891697 0 1 0 514.2 119.8 Z" fill="#fff" fill-rule="evenodd"/>
<text x="541.5" y="129.5" font-size="30" fill="#555" font-weight="normal" text-anchor="start" textLength="42.6" lengthAdjust="spacingAndGlyphs"  stroke="#555" stroke-width="0.6">Abr</text>
<text x="591.9" y="129.5" font-size="30" fill="#4b1a14" font-weight="normal" text-anchor="start" textLength="103.8" lengthAdjust="spacingAndGlyphs"  stroke="#4b1a14" stroke-width="0.7">6046.77</text>
<text x="716.8" y="129.5" font-size="30" fill="#555" font-weight="normal" text-anchor="start" textLength="50.9" lengthAdjust="spacingAndGlyphs"  stroke="#555" stroke-width="0.6">Max</text>
<text x="773.3" y="129.5" font-size="30" fill="#4b1a14" font-weight="normal" text-anchor="start" textLength="104" lengthAdjust="spacingAndGlyphs"  stroke="#4b1a14" stroke-width="0.7">6075.94</text>
<text x="898.4" y="129.5" font-size="30" fill="#555" font-weight="normal" text-anchor="start" textLength="44.1" lengthAdjust="spacingAndGlyphs"  stroke="#555" stroke-width="0.6">Min</text>
<text x="949.4" y="129.5" font-size="30" fill="#4b1a14" font-weight="normal" text-anchor="start" textLength="102.8" lengthAdjust="spacingAndGlyphs"  stroke="#4b1a14" stroke-width="0.7">6010.23</text>
<text x="1075.2" y="129.5" font-size="30" fill="#555" font-weight="normal" text-anchor="start" textLength="43.8" lengthAdjust="spacingAndGlyphs"  stroke="#555" stroke-width="0.6">Fch</text>
<text x="1125.2" y="129.5" font-size="30" fill="#4b1a14" font-weight="normal" text-anchor="start" textLength="104" lengthAdjust="spacingAndGlyphs"  stroke="#4b1a14" stroke-width="0.7">6031.64</text>
<circle cx="2469" cy="116" r="6" fill="#9a9a9a"/>
<text x="2482.7" y="124.1" font-size="23.5" fill="#999" font-weight="normal" text-anchor="start" textLength="150.2" lengthAdjust="spacingAndGlyphs"  stroke="#999" stroke-width="0.5">Market Closed</text>
<text x="26.4" y="170.3" font-size="23" fill="#4d4d4d" font-weight="normal" text-anchor="start" textLength="30.3" lengthAdjust="spacingAndGlyphs"  stroke="#4d4d4d" stroke-width="0.5">MA</text>
<text x="64.8" y="170.3" font-size="23" fill="#4d4d4d" font-weight="normal" text-anchor="start" textLength="39" lengthAdjust="spacingAndGlyphs"  stroke="#4d4d4d" stroke-width="0.5">(50,</text>
<text x="113.2" y="170.3" font-size="23" fill="#4d4d4d" font-weight="normal" text-anchor="start" textLength="60.5" lengthAdjust="spacingAndGlyphs"  stroke="#4d4d4d" stroke-width="0.5">close,</text>
<text x="183" y="170.3" font-size="23" fill="#4d4d4d" font-weight="normal" text-anchor="start" textLength="20.4" lengthAdjust="spacingAndGlyphs"  stroke="#4d4d4d" stroke-width="0.5">0)</text>
<path d="M214.7 158.8 H228.3 L221.5 165.2 Z" fill="#c6c6c6"/>
<rect x="249.2" y="148.3" width="27.6" height="27.6" fill="#d8d8d8"/>
<path d="M253.2 162.1 Q263 146.6 272.8 162.1 Q263 177.6 253.2 162.1 Z" fill="#fff"/>
<circle cx="263" cy="162.1" r="5.1" fill="#d8d8d8"/><circle cx="263" cy="162.1" r="2.4" fill="#fff"/>
<rect x="283.2" y="148.3" width="27.6" height="27.6" fill="#d8d8d8"/>
<path d="M303.9 160.1 L306.4 160.2 L306.4 164 L303.9 164.1 L303.3 165.6 L305 167.4 L302.3 170.1 L300.5 168.4 L299 169 L298.9 171.5 L295.1 171.5 L295 169 L293.5 168.4 L291.7 170.1 L289 167.4 L290.7 165.6 L290.1 164.1 L287.6 164 L287.6 160.2 L290.1 160.1 L290.7 158.6 L289 156.8 L291.7 154.1 L293.5 155.8 L295 155.2 L295.1 152.7 L298.9 152.7 L299 155.2 L300.5 155.8 L302.3 154.1 L305 156.8 L303.3 158.6 Z M300.6 162.1 A3.5870036101083036 3.5870036101083036 0 1 0 293.4 162.1 A3.5870036101083036 3.5870036101083036 0 1 0 300.6 162.1 Z" fill="#fff" fill-rule="evenodd"/>
<rect x="317.2" y="148.3" width="27.6" height="27.6" fill="#d8d8d8"/>
<path d="M322.8 153.9 L339.2 170.3 M339.2 153.9 L322.8 170.3" stroke="#fff" stroke-width="3.1" fill="none"/>
<text x="361.4" y="168" font-size="23" fill="#0b18d8" font-weight="normal" text-anchor="start" textLength="108.2" lengthAdjust="spacingAndGlyphs"  stroke="#0b18d8" stroke-width="0.7">5817.2866</text>
<text x="26.4" y="212.3" font-size="23" fill="#4d4d4d" font-weight="normal" text-anchor="start" textLength="30.3" lengthAdjust="spacingAndGlyphs"  stroke="#4d4d4d" stroke-width="0.5">MA</text>
<text x="64.8" y="212.3" font-size="23" fill="#4d4d4d" font-weight="normal" text-anchor="start" textLength="39" lengthAdjust="spacingAndGlyphs"  stroke="#4d4d4d" stroke-width="0.5">(13,</text>
<text x="113.2" y="212.3" font-size="23" fill="#4d4d4d" font-weight="normal" text-anchor="start" textLength="60.5" lengthAdjust="spacingAndGlyphs"  stroke="#4d4d4d" stroke-width="0.5">close,</text>
<text x="183" y="212.3" font-size="23" fill="#4d4d4d" font-weight="normal" text-anchor="start" textLength="20.4" lengthAdjust="spacingAndGlyphs"  stroke="#4d4d4d" stroke-width="0.5">0)</text>
<path d="M214.7 200.8 H228.3 L221.5 207.2 Z" fill="#c6c6c6"/>
<rect x="249.2" y="190.3" width="27.6" height="27.6" fill="#d8d8d8"/>
<path d="M253.2 204.1 Q263 188.6 272.8 204.1 Q263 219.6 253.2 204.1 Z" fill="#fff"/>
<circle cx="263" cy="204.1" r="5.1" fill="#d8d8d8"/><circle cx="263" cy="204.1" r="2.4" fill="#fff"/>
<rect x="283.2" y="190.3" width="27.6" height="27.6" fill="#d8d8d8"/>
<path d="M303.9 202.1 L306.4 202.2 L306.4 206 L303.9 206.1 L303.3 207.6 L305 209.4 L302.3 212.1 L300.5 210.4 L299 211 L298.9 213.5 L295.1 213.5 L295 211 L293.5 210.4 L291.7 212.1 L289 209.4 L290.7 207.6 L290.1 206.1 L287.6 206 L287.6 202.2 L290.1 202.1 L290.7 200.6 L289 198.8 L291.7 196.1 L293.5 197.8 L295 197.2 L295.1 194.7 L298.9 194.7 L299 197.2 L300.5 197.8 L302.3 196.1 L305 198.8 L303.3 200.6 Z M300.6 204.1 A3.5870036101083036 3.5870036101083036 0 1 0 293.4 204.1 A3.5870036101083036 3.5870036101083036 0 1 0 300.6 204.1 Z" fill="#fff" fill-rule="evenodd"/>
<rect x="317.2" y="190.3" width="27.6" height="27.6" fill="#d8d8d8"/>
<path d="M322.8 195.9 L339.2 212.3 M339.2 195.9 L322.8 212.3" stroke="#fff" stroke-width="3.1" fill="none"/>
<text x="361.4" y="210" font-size="23" fill="#d8301f" font-weight="normal" text-anchor="start" textLength="108.2" lengthAdjust="spacingAndGlyphs"  stroke="#d8301f" stroke-width="0.7">5884.0222</text>
<text x="26.2" y="763.8" font-size="23" fill="#4d4d4d" font-weight="normal" text-anchor="start" textLength="59.2" lengthAdjust="spacingAndGlyphs"  stroke="#4d4d4d" stroke-width="0.5">MACD</text>
<text x="94.7" y="763.8" font-size="23" fill="#4d4d4d" font-weight="normal" text-anchor="start" textLength="39.6" lengthAdjust="spacingAndGlyphs"  stroke="#4d4d4d" stroke-width="0.5">(12,</text>
<text x="143.6" y="763.8" font-size="23" fill="#4d4d4d" font-weight="normal" text-anchor="start" textLength="30.4" lengthAdjust="spacingAndGlyphs"  stroke="#4d4d4d" stroke-width="0.5">26,</text>
<text x="184.4" y="763.8" font-size="23" fill="#4d4d4d" font-weight="normal" text-anchor="start" textLength="60.9" lengthAdjust="spacingAndGlyphs"  stroke="#4d4d4d" stroke-width="0.5">close,</text>
<text x="255.5" y="763.8" font-size="23" fill="#4d4d4d" font-weight="normal" text-anchor="start" textLength="20.2" lengthAdjust="spacingAndGlyphs"  stroke="#4d4d4d" stroke-width="0.5">9)</text>
<path d="M285.7 752.5 H300.6 L293.1 759 Z" fill="#c6c6c6"/>
<rect x="320.8" y="742" width="27.8" height="27.8" fill="#d8d8d8"/>
<path d="M324.9 755.9 Q334.7 740.2 344.5 755.9 Q334.7 771.6 324.9 755.9 Z" fill="#fff"/>
<circle cx="334.7" cy="755.9" r="5.1" fill="#d8d8d8"/><circle cx="334.7" cy="755.9" r="2.4" fill="#fff"/>
<rect x="355" y="742" width="27.8" height="27.8" fill="#d8d8d8"/>
<path d="M375.9 753.9 L378.3 754 L378.3 757.8 L375.9 757.9 L375.2 759.4 L376.9 761.2 L374.2 763.9 L372.4 762.2 L370.9 762.9 L370.8 765.3 L367 765.3 L366.9 762.9 L365.4 762.2 L363.6 763.9 L360.9 761.2 L362.6 759.4 L361.9 757.9 L359.5 757.8 L359.5 754 L361.9 753.9 L362.6 752.4 L360.9 750.6 L363.6 747.9 L365.4 749.6 L366.9 748.9 L367 746.5 L370.8 746.5 L370.9 748.9 L372.4 749.6 L374.2 747.9 L376.9 750.6 L375.2 752.4 Z M372.5 755.9 A3.612996389891697 3.612996389891697 0 1 0 365.3 755.9 A3.612996389891697 3.612996389891697 0 1 0 372.5 755.9 Z" fill="#fff" fill-rule="evenodd"/>
<rect x="389.1" y="742" width="27.8" height="27.8" fill="#d8d8d8"/>
<path d="M394.8 747.7 L411.2 764.1 M411.2 747.7 L394.8 764.1" stroke="#fff" stroke-width="3.1" fill="none"/>
<text x="432.6" y="761.7" font-size="23" fill="#d8301f" font-weight="normal" text-anchor="start" textLength="83.9" lengthAdjust="spacingAndGlyphs"  stroke="#d8301f" stroke-width="0.7">29.1058</text>
<text x="537.3" y="761.7" font-size="23" fill="#0b18d8" font-weight="normal" text-anchor="start" textLength="83.2" lengthAdjust="spacingAndGlyphs"  stroke="#0b18d8" stroke-width="0.7">60.7830</text>
<text x="641.9" y="761.7" font-size="23" fill="#d8301f" font-weight="normal" text-anchor="start" textLength="82.6" lengthAdjust="spacingAndGlyphs"  stroke="#d8301f" stroke-width="0.7">31.6773</text>
<text x="27.1" y="1087.6" font-size="23" fill="#4d4d4d" font-weight="normal" text-anchor="start" textLength="29.5" lengthAdjust="spacingAndGlyphs"  stroke="#4d4d4d" stroke-width="0.5">RSI</text>
<text x="67.3" y="1087.6" font-size="23" fill="#4d4d4d" font-weight="normal" text-anchor="start" textLength="47.5" lengthAdjust="spacingAndGlyphs"  stroke="#4d4d4d" stroke-width="0.5">(IFR)</text>
<text x="125.5" y="1087.6" font-size="23" fill="#4d4d4d" font-weight="normal" text-anchor="start" textLength="39.8" lengthAdjust="spacingAndGlyphs"  stroke="#4d4d4d" stroke-width="0.5">(14)</text>
<path d="M174.8 1076.2 H189.4 L182.1 1082.8 Z" fill="#c6c6c6"/>
<rect x="210.2" y="1066" width="27.8" height="27.8" fill="#d8d8d8"/>
<path d="M214.3 1079.9 Q224.1 1064.2 233.9 1079.9 Q224.1 1095.6 214.3 1079.9 Z" fill="#fff"/>
<circle cx="224.1" cy="1079.9" r="5.1" fill="#d8d8d8"/><circle cx="224.1" cy="1079.9" r="2.4" fill="#fff"/>
<rect x="244.4" y="1066" width="27.8" height="27.8" fill="#d8d8d8"/>
<path d="M265.3 1077.9 L267.7 1078 L267.7 1081.8 L265.3 1081.9 L264.6 1083.4 L266.3 1085.2 L263.6 1087.9 L261.8 1086.2 L260.3 1086.9 L260.2 1089.3 L256.4 1089.3 L256.3 1086.9 L254.8 1086.2 L253 1087.9 L250.3 1085.2 L252 1083.4 L251.3 1081.9 L248.9 1081.8 L248.9 1078 L251.3 1077.9 L252 1076.4 L250.3 1074.6 L253 1071.9 L254.8 1073.6 L256.3 1072.9 L256.4 1070.5 L260.2 1070.5 L260.3 1072.9 L261.8 1073.6 L263.6 1071.9 L266.3 1074.6 L264.6 1076.4 Z M261.9 1079.9 A3.612996389891697 3.612996389891697 0 1 0 254.7 1079.9 A3.612996389891697 3.612996389891697 0 1 0 261.9 1079.9 Z" fill="#fff" fill-rule="evenodd"/>
<rect x="278.6" y="1066" width="27.8" height="27.8" fill="#d8d8d8"/>
<path d="M284.3 1071.7 L300.7 1088.1 M300.7 1071.7 L284.3 1088.1" stroke="#fff" stroke-width="3.1" fill="none"/>
<text x="322.4" y="1086" font-size="23" fill="#6a1a78" font-weight="normal" text-anchor="start" textLength="83.5" lengthAdjust="spacingAndGlyphs"  stroke="#6a1a78" stroke-width="0.7">70.4875</text>
<text x="42.7" y="689.5" font-size="42.5" fill="#0a0a0a" font-weight="bold" text-anchor="start" textLength="178.6" lengthAdjust="spacingAndGlyphs"  stroke="#0a0a0a" stroke-width="0.9">Investing</text>
<text x="222.5" y="689.5" font-size="30" fill="#555" font-weight="normal" text-anchor="start" textLength="58.5" lengthAdjust="spacingAndGlyphs" >.com</text>
<path d="M161.2 662.8 L167.5 655.3 L171 656.2 L166 663.8 Z" fill="#f4a024"/></svg>
</body></html>
